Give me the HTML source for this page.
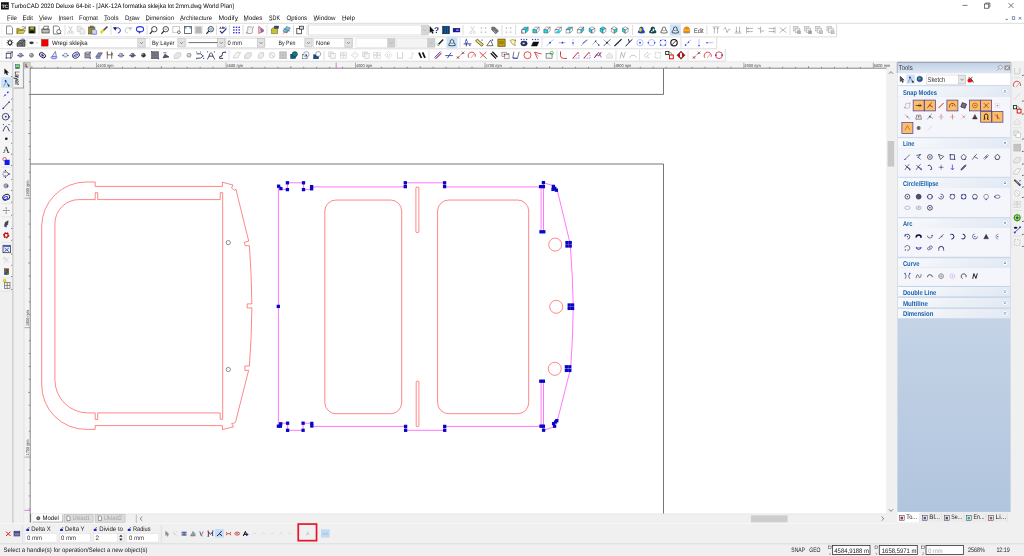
<!DOCTYPE html>
<html lang="en"><head><meta charset="utf-8"><title>TurboCAD 2020 Deluxe 64-bit</title>
<style>
html,body{margin:0;padding:0;background:#f0f0f0;overflow:hidden}
svg{display:block;will-change:transform;font-family:'Liberation Sans', sans-serif;}
text{white-space:pre}
</style></head><body>
<svg width="1024" height="556" viewBox="0 0 1024 556" font-family="'Liberation Sans', sans-serif" text-rendering="geometricPrecision">
<rect x="0.00" y="0.00" width="1024.00" height="556.00" fill="#f0f0f0" />
<rect x="0.00" y="0.00" width="1024.00" height="23.50" fill="#ffffff" />
<rect x="0.00" y="23.50" width="1024.00" height="38.00" fill="#ffffff" />
<rect x="1.00" y="2.20" width="7.80" height="7.30" fill="#111" />
<text x="1.70" y="7.80" font-size="4.8" fill="#fff" textLength="6.40" lengthAdjust="spacingAndGlyphs" font-weight="bold" >TC</text>
<text x="11.00" y="8.30" font-size="6.4" fill="#000" textLength="223.00" lengthAdjust="spacingAndGlyphs" >TurboCAD 2020 Deluxe 64-bit - [JAK-12A formatka sklejka lot 2mm.dwg World Plan]</text>
<line x1="962.50" y1="5.40" x2="967.50" y2="5.40" stroke="#222" stroke-width="0.6" />
<rect x="984.60" y="4.00" width="4.20" height="4.20" fill="none" stroke="#222" stroke-width="0.6" />
<path d="M985.8 4 V3 H989.9 V7 H988.8" stroke="#222" fill="none" stroke-width="0.6" />
<path d="M1008.5 3 L1013.5 8 M1013.5 3 L1008.5 8" stroke="#222" fill="none" stroke-width="0.6" />
<text x="7.00" y="19.60" font-size="6.4" fill="#111" textLength="10.00" lengthAdjust="spacingAndGlyphs" >File</text>
<line x1="7.30" y1="20.60" x2="9.20" y2="20.60" stroke="#333" stroke-width="0.4" />
<text x="22.50" y="19.60" font-size="6.4" fill="#111" textLength="10.50" lengthAdjust="spacingAndGlyphs" >Edit</text>
<line x1="22.80" y1="20.60" x2="24.82" y2="20.60" stroke="#333" stroke-width="0.4" />
<text x="39.00" y="19.60" font-size="6.4" fill="#111" textLength="13.00" lengthAdjust="spacingAndGlyphs" >View</text>
<line x1="39.30" y1="20.60" x2="41.95" y2="20.60" stroke="#333" stroke-width="0.4" />
<text x="58.50" y="19.60" font-size="6.4" fill="#111" textLength="14.50" lengthAdjust="spacingAndGlyphs" >Insert</text>
<line x1="58.80" y1="20.60" x2="60.62" y2="20.60" stroke="#333" stroke-width="0.4" />
<text x="79.00" y="19.60" font-size="6.4" fill="#111" textLength="19.00" lengthAdjust="spacingAndGlyphs" >Format</text>
<line x1="85.63" y1="20.60" x2="88.20" y2="20.60" stroke="#333" stroke-width="0.4" />
<text x="104.00" y="19.60" font-size="6.4" fill="#111" textLength="14.50" lengthAdjust="spacingAndGlyphs" >Tools</text>
<line x1="104.30" y1="20.60" x2="106.60" y2="20.60" stroke="#333" stroke-width="0.4" />
<text x="125.00" y="19.60" font-size="6.4" fill="#111" textLength="14.50" lengthAdjust="spacingAndGlyphs" >Draw</text>
<line x1="128.93" y1="20.60" x2="131.95" y2="20.60" stroke="#333" stroke-width="0.4" />
<text x="145.50" y="19.60" font-size="6.4" fill="#111" textLength="28.50" lengthAdjust="spacingAndGlyphs" >Dimension</text>
<line x1="145.80" y1="20.60" x2="148.37" y2="20.60" stroke="#333" stroke-width="0.4" />
<text x="180.00" y="19.60" font-size="6.4" fill="#111" textLength="32.00" lengthAdjust="spacingAndGlyphs" >Architecture</text>
<line x1="180.30" y1="20.60" x2="182.37" y2="20.60" stroke="#333" stroke-width="0.4" />
<text x="218.50" y="19.60" font-size="6.4" fill="#111" textLength="19.50" lengthAdjust="spacingAndGlyphs" >Modify</text>
<line x1="235.05" y1="20.60" x2="237.70" y2="20.60" stroke="#333" stroke-width="0.4" />
<text x="243.50" y="19.60" font-size="6.4" fill="#111" textLength="19.00" lengthAdjust="spacingAndGlyphs" >Modes</text>
<line x1="243.80" y1="20.60" x2="247.00" y2="20.60" stroke="#333" stroke-width="0.4" />
<text x="269.00" y="19.60" font-size="6.4" fill="#111" textLength="11.00" lengthAdjust="spacingAndGlyphs" >SDK</text>
<line x1="269.30" y1="20.60" x2="272.37" y2="20.60" stroke="#333" stroke-width="0.4" />
<text x="286.50" y="19.60" font-size="6.4" fill="#111" textLength="20.50" lengthAdjust="spacingAndGlyphs" >Options</text>
<line x1="289.73" y1="20.60" x2="292.06" y2="20.60" stroke="#333" stroke-width="0.4" />
<text x="313.50" y="19.60" font-size="6.4" fill="#111" textLength="22.00" lengthAdjust="spacingAndGlyphs" >Window</text>
<line x1="313.80" y1="20.60" x2="316.87" y2="20.60" stroke="#333" stroke-width="0.4" />
<text x="342.00" y="19.60" font-size="6.4" fill="#111" textLength="13.00" lengthAdjust="spacingAndGlyphs" >Help</text>
<line x1="342.30" y1="20.60" x2="344.95" y2="20.60" stroke="#333" stroke-width="0.4" />
<line x1="1005.60" y1="19.40" x2="1007.80" y2="19.40" stroke="#3b5a8a" stroke-width="0.8" />
<rect x="1012.20" y="16.80" width="2.60" height="2.60" fill="none" stroke="#3b5a8a" stroke-width="0.6" />
<path d="M1018.8 17 L1021.2 19.6 M1021.2 17 L1018.8 19.6" stroke="#3b5a8a" fill="none" stroke-width="0.7" />
<line x1="0.00" y1="23.30" x2="1024.00" y2="23.30" stroke="#d8d8d8" stroke-width="0.9" />
<line x1="1.80" y1="25.00" x2="1.80" y2="34.50" stroke="#d4d4d4" stroke-width="0.6" stroke-dasharray="0.8 0.8"/>
<line x1="1.80" y1="38.50" x2="1.80" y2="48.00" stroke="#d4d4d4" stroke-width="0.6" stroke-dasharray="0.8 0.8"/>
<line x1="1.80" y1="50.50" x2="1.80" y2="60.00" stroke="#d4d4d4" stroke-width="0.6" stroke-dasharray="0.8 0.8"/>
<line x1="0.00" y1="36.90" x2="836.60" y2="36.90" stroke="#d8d8d8" stroke-width="0.9" />
<line x1="836.60" y1="24.00" x2="836.60" y2="36.90" stroke="#d8d8d8" stroke-width="0.9" />
<path d="M6.5 26 H10.7 L12.5 27.8 V34 H6.5 Z" stroke="#444" fill="#fff" stroke-width="0.6" />
<path d="M16.8 33.4 V28.4 H19.2 L20.2 29.4 H23.2 V30.6" stroke="#55500a" fill="#b8b030" stroke-width="0.5" />
<path d="M16.8 33.4 L18.8 30.4 H25.4 L23.4 33.4 Z" stroke="#55500a" fill="#d8d040" stroke-width="0.5" />
<path d="M21.6 27.2 Q23.4 25.6 24.8 27.4 L25.4 26.6 V28.8 H23.4 L24.2 28" stroke="#333" fill="none" stroke-width="0.5" />
<rect x="28.90" y="26.90" width="6.20" height="6.20" fill="#4a4a10" stroke="#111" stroke-width="0.5" />
<rect x="30.20" y="27.20" width="3.60" height="2.20" fill="#b8b040" />
<rect x="30.30" y="30.80" width="3.40" height="2.20" fill="#0a0a0a" />
<line x1="39.00" y1="25.00" x2="39.00" y2="35.00" stroke="#c8c8c8" stroke-width="0.6" />
<rect x="41.90" y="29.00" width="7.20" height="4.00" fill="#bbb" stroke="#222" stroke-width="0.6" />
<path d="M43.1 29 L44.1 26.2 H48.5 L47.7 29 Z" stroke="#222" fill="#fff" stroke-width="0.6" />
<path d="M53.4 26 H57.8 L59.4 27.6 V34 H53.4 Z" stroke="#333" fill="#fff" stroke-width="0.6" />
<circle cx="58.80" cy="31.60" r="2" stroke="#222" fill="#fff" stroke-width="0.6" />
<line x1="60.20" y1="33.00" x2="61.30" y2="34.20" stroke="#222" stroke-width="0.7" />
<line x1="65.00" y1="25.00" x2="65.00" y2="35.00" stroke="#c8c8c8" stroke-width="0.6" />
<path d="M68.7 26.2 L71.7 31.6 M72.3 26.2 L69.3 31.6" stroke="#bdbdbd" fill="none" stroke-width="0.8" />
<circle cx="68.70" cy="32.60" r="1.1" stroke="#bdbdbd" fill="none" stroke-width="0.7" />
<circle cx="72.30" cy="32.60" r="1.1" stroke="#bdbdbd" fill="none" stroke-width="0.7" />
<path d="M77.2 26.2 H80.6 L81.8 27.4 V31.6 H77.2 Z" stroke="#c4c4c4" fill="#eee" stroke-width="0.6" />
<path d="M80 28.6 H83.4 L84.8 30 V34 H80 Z" stroke="#c4c4c4" fill="#eee" stroke-width="0.6" />
<rect x="88.50" y="27.00" width="6.40" height="7.00" fill="#9a8a2a" stroke="#4a4a10" stroke-width="0.5" />
<rect x="90.10" y="26.00" width="3.20" height="1.60" fill="#888" stroke="#333" stroke-width="0.4" />
<path d="M91.9 29.4 H95.1 L96.7 30.8 V34.2 H91.9 Z" stroke="#334a9a" fill="#c8d4f4" stroke-width="0.5" />
<line x1="100.60" y1="33.00" x2="103.60" y2="30.20" stroke="#e8d818" stroke-width="2.4" />
<line x1="103.60" y1="30.20" x2="107.40" y2="26.60" stroke="#445" stroke-width="1.5" />
<line x1="111.00" y1="25.00" x2="111.00" y2="35.00" stroke="#c8c8c8" stroke-width="0.6" />
<path d="M115.6 28.4 Q119.6 26.8 120.4 30 Q120.6 32.6 117.8 33.2" stroke="#2a3ad8" fill="none" stroke-width="1.0" />
<path d="M112.8 27.4 L116.4 27 L115.6 30.8 Z" stroke="none" fill="#14148c" stroke-width="0.5" />
<path d="M129.9 28.4 Q125.9 26.8 125.1 30 Q124.9 32.6 127.7 33.2" stroke="#c8c8c8" fill="none" stroke-width="1.0" />
<path d="M132.7 27.4 L129.1 27 L129.9 30.8 Z" stroke="none" fill="#c4c4c4" stroke-width="0.5" />
<ellipse cx="140" cy="29.2" rx="3.6" ry="2.6" fill="none" stroke="#2a3ae0" stroke-width="1.1"/>
<path d="M138.4 30.6 L141 31.8 L139 34 Z" stroke="none" fill="#2a3ae0" stroke-width="0.5" />
<line x1="147.00" y1="25.00" x2="147.00" y2="35.00" stroke="#c8c8c8" stroke-width="0.6" />
<circle cx="154.30" cy="29.20" r="2.7" stroke="#222" fill="#fff" stroke-width="0.8" />
<line x1="152.30" y1="31.20" x2="149.90" y2="33.80" stroke="#222" stroke-width="1.2" />
<circle cx="165.80" cy="29.20" r="2.7" stroke="#222" fill="#fff" stroke-width="0.8" />
<line x1="163.80" y1="31.20" x2="161.40" y2="33.80" stroke="#222" stroke-width="1.2" />
<path d="M164.6 29.2 H167" stroke="#222" fill="none" stroke-width="0.5" />
<rect x="172.90" y="26.40" width="6.40" height="6.40" fill="#fff" stroke="#999" stroke-width="0.5" />
<circle cx="178.90" cy="32.20" r="1.4" stroke="#222" fill="#fff" stroke-width="0.6" />
<rect x="184.40" y="26.60" width="7.20" height="6.80" fill="#fff" stroke="#334" stroke-width="0.7" />
<rect x="185.00" y="27.20" width="1.60" height="1.40" fill="#5aa0e8" />
<rect x="189.40" y="27.20" width="1.60" height="1.40" fill="#5aa0e8" />
<rect x="195.10" y="26.40" width="6.80" height="7.20" fill="#b4b4b4" stroke="#d8d8d8" stroke-width="1.2" />
<circle cx="210.80" cy="29.20" r="2.7" stroke="#222" fill="#fff" stroke-width="0.8" />
<line x1="208.80" y1="31.20" x2="206.40" y2="33.80" stroke="#222" stroke-width="1.2" />
<circle cx="210.80" cy="29.20" r="1.8" stroke="none" fill="#9ac0e8" stroke-width="0.5" />
<line x1="216.50" y1="25.00" x2="216.50" y2="35.00" stroke="#c8c8c8" stroke-width="0.6" />
<text x="223.00" y="29.00" font-size="3.4" fill="#111" font-weight="bold" text-anchor="middle" >ABC</text>
<path d="M220 30.8 L222 33.2 L226.2 28.8" stroke="#1a2ab0" fill="none" stroke-width="1.1" />
<line x1="229.50" y1="25.00" x2="229.50" y2="35.00" stroke="#c8c8c8" stroke-width="0.6" />
<rect x="233.10" y="26.60" width="1.40" height="1.40" fill="#2a2ae8" />
<rect x="233.10" y="29.30" width="1.40" height="1.40" fill="#2a2ae8" />
<rect x="233.10" y="32.00" width="1.40" height="1.40" fill="#2a2ae8" />
<rect x="235.80" y="26.60" width="1.40" height="1.40" fill="#2a2ae8" />
<rect x="235.80" y="29.30" width="1.40" height="1.40" fill="#2a2ae8" />
<rect x="235.80" y="32.00" width="1.40" height="1.40" fill="#2a2ae8" />
<rect x="238.50" y="26.60" width="1.40" height="1.40" fill="#2a2ae8" />
<rect x="238.50" y="29.30" width="1.40" height="1.40" fill="#2a2ae8" />
<rect x="238.50" y="32.00" width="1.40" height="1.40" fill="#2a2ae8" />
<line x1="243.00" y1="25.00" x2="243.00" y2="35.00" stroke="#c8c8c8" stroke-width="0.6" />
<path d="M247.4 33.4 Q246.4 30 247.8 29.4 V27 Q249 26.2 250 27 Q251.6 26.4 252.6 28 V31.4 Q252.4 33.4 251 33.6 Z" stroke="#777" fill="#f4f4f4" stroke-width="0.6" />
<circle cx="253.40" cy="27.00" r="0.6" stroke="none" fill="#e33" stroke-width="0.5" />
<circle cx="246.40" cy="32.80" r="0.6" stroke="none" fill="#e33" stroke-width="0.5" />
<path d="M258.8 26.4 L263.6 30 L258.8 33.6 Z" stroke="#d22" fill="#fde" stroke-width="0.7" />
<path d="M260.6 28.6 L263.8 31 L261.4 32.6 Z" stroke="#223a9a" fill="#88a" stroke-width="0.5" />
<line x1="267.00" y1="25.00" x2="267.00" y2="35.00" stroke="#c8c8c8" stroke-width="0.6" />
<path d="M271.4 33.6 V29 L274 27.2 H277.6 V33.6 Z" stroke="#55500a" fill="#c8c030" stroke-width="0.5" />
<rect x="274.60" y="26.00" width="4.00" height="2.40" fill="#334a9a" stroke="#223" stroke-width="0.4" />
<path d="M282.9 31 L286.5 26.6 L290.3 28 L286.9 33 Z" stroke="#445" fill="#6ad0e0" stroke-width="0.5" />
<line x1="282.90" y1="33.40" x2="287.50" y2="31.40" stroke="#c33" stroke-width="0.7" />
<line x1="283.70" y1="28.60" x2="290.10" y2="31.20" stroke="#334a9a" stroke-width="0.6" />
<line x1="293.50" y1="25.00" x2="293.50" y2="35.00" stroke="#c8c8c8" stroke-width="0.6" />
<rect x="296.80" y="28.40" width="4.60" height="5.40" fill="#fff" stroke="#222" stroke-width="0.7" />
<rect x="299.60" y="26.20" width="4.00" height="3.00" fill="#dde" stroke="#222" stroke-width="0.7" />
<line x1="307.00" y1="25.00" x2="307.00" y2="35.00" stroke="#c8c8c8" stroke-width="0.6" />
<rect x="308.50" y="25.00" width="120.00" height="10.00" fill="#fff" stroke="#c8c8c8" stroke-width="0.6" />
<rect x="421.20" y="25.30" width="7.10" height="9.40" fill="#d6d6d6" stroke="#c4c4c4" stroke-width="0.4" />
<path d="M423.2 29.2 L424.7 30.8 L426.2 29.2" stroke="#aaa" fill="none" stroke-width="0.6" />
<path d="M429.9 26.4 V32.6 L431.3 31.2 L432.3 33.6 L433.3 33.1 L432.3 30.9 H434.1 Z" stroke="#111" fill="#111" stroke-width="0.4" />
<text x="436.50" y="33.00" font-size="8.4" fill="#1a1a8a" font-weight="bold" text-anchor="middle" >?</text>
<rect x="442.60" y="26.20" width="6.80" height="7.60" fill="#0c3a6c" stroke="#06203c" stroke-width="0.5" />
<rect x="444.40" y="26.60" width="1.40" height="6.80" fill="#1a5a9c" />
<rect x="447.00" y="26.60" width="1.00" height="6.80" fill="#1a5a9c" />
<rect x="453.10" y="28.20" width="6.80" height="3.80" fill="#1a1aa0" stroke="#0a0a70" stroke-width="0.4" />
<rect x="456.10" y="29.60" width="2.60" height="1.00" fill="#c8c8f8" />
<line x1="463.00" y1="25.00" x2="463.00" y2="35.00" stroke="#c8c8c8" stroke-width="0.6" />
<path d="M470.7 26.2 L473.7 31.6 M474.3 26.2 L471.3 31.6" stroke="#cfcfcf" fill="none" stroke-width="0.8" />
<circle cx="470.70" cy="32.60" r="1.1" stroke="#cfcfcf" fill="none" stroke-width="0.7" />
<circle cx="474.30" cy="32.60" r="1.1" stroke="#cfcfcf" fill="none" stroke-width="0.7" />
<rect x="480.70" y="27.20" width="1.30" height="1.30" fill="#c0c0c0" />
<rect x="480.70" y="31.60" width="1.30" height="1.30" fill="#c0c0c0" />
<rect x="485.10" y="27.20" width="1.30" height="1.30" fill="#c0c0c0" />
<rect x="485.10" y="31.60" width="1.30" height="1.30" fill="#c0c0c0" />
<rect x="481.30" y="27.80" width="4.40" height="4.40" fill="none" stroke="#c0c0c0" stroke-width="0.4" stroke-dasharray="0.8 0.8"/>
<path d="M491.8 27.2 H494.6 L498.4 31 L495.8 33.8 L491.8 29.8 Z" stroke="#333" fill="#777" stroke-width="0.6" />
<path d="M493.4 30.2 L496 32.8" stroke="#ddd" fill="none" stroke-width="0.5" />
<line x1="502.00" y1="25.00" x2="502.00" y2="35.00" stroke="#c8c8c8" stroke-width="0.6" />
<rect x="505.70" y="27.20" width="1.30" height="1.30" fill="#c0c0c0" />
<rect x="505.70" y="31.60" width="1.30" height="1.30" fill="#c0c0c0" />
<rect x="510.10" y="27.20" width="1.30" height="1.30" fill="#c0c0c0" />
<rect x="510.10" y="31.60" width="1.30" height="1.30" fill="#c0c0c0" />
<rect x="506.30" y="27.80" width="4.40" height="4.40" fill="none" stroke="#c0c0c0" stroke-width="0.4" stroke-dasharray="0.8 0.8"/>
<line x1="515.50" y1="25.00" x2="515.50" y2="35.00" stroke="#c8c8c8" stroke-width="0.6" />
<path d="M521.8 29.6 H525.6 V33 H521.8 Z" stroke="#3a4450" fill="#fff" stroke-width="0.45" />
<path d="M521.8 29.6 L524.4 27.2 H528.2 L525.6 29.6 Z" stroke="#3a4450" fill="#18dce4" stroke-width="0.45" />
<path d="M525.6 29.6 L528.2 27.2 V30.6 L525.6 33 Z" stroke="#3a4450" fill="#18dce4" stroke-width="0.45" />
<line x1="521.60" y1="30.40" x2="521.60" y2="33.20" stroke="#2a3ae0" stroke-width="0.6" />
<line x1="521.60" y1="33.20" x2="523.60" y2="33.20" stroke="#e03030" stroke-width="0.6" />
<path d="M532.8 29.6 H536.6 V33 H532.8 Z" stroke="#3a4450" fill="#18dce4" stroke-width="0.45" />
<path d="M532.8 29.6 L535.4 27.2 H539.2 L536.6 29.6 Z" stroke="#3a4450" fill="#fff" stroke-width="0.45" />
<path d="M536.6 29.6 L539.2 27.2 V30.6 L536.6 33 Z" stroke="#3a4450" fill="#fff" stroke-width="0.45" />
<path d="M543.8 29.6 H547.6 V33 H543.8 Z" stroke="#3a4450" fill="#18dce4" stroke-width="0.45" />
<path d="M543.8 29.6 L546.4 27.2 H550.2 L547.6 29.6 Z" stroke="#3a4450" fill="#fff" stroke-width="0.45" />
<path d="M547.6 29.6 L550.2 27.2 V30.6 L547.6 33 Z" stroke="#3a4450" fill="#fff" stroke-width="0.45" />
<path d="M555.0 29.6 H558.8000000000001 V33 H555.0 Z" stroke="#3a4450" fill="#fff" stroke-width="0.45" />
<path d="M555.0 29.6 L557.6 27.2 H561.4000000000001 L558.8000000000001 29.6 Z" stroke="#3a4450" fill="#fff" stroke-width="0.45" />
<path d="M558.8000000000001 29.6 L561.4000000000001 27.2 V30.6 L558.8000000000001 33 Z" stroke="#3a4450" fill="#fff" stroke-width="0.45" />
<path d="M555.0 33 H558.8000000000001 L561.4000000000001 30.6 H557.6 Z" stroke="none" fill="#18dce4" stroke-width="0.5" />
<path d="M566.0999999999999 29.6 H569.9 V33 H566.0999999999999 Z" stroke="#3a4450" fill="#fff" stroke-width="0.45" />
<path d="M566.0999999999999 29.6 L568.6999999999999 27.2 H572.5 L569.9 29.6 Z" stroke="#3a4450" fill="#18dce4" stroke-width="0.45" />
<path d="M569.9 29.6 L572.5 27.2 V30.6 L569.9 33 Z" stroke="#3a4450" fill="#fff" stroke-width="0.45" />
<path d="M577.3 29.6 H581.1 V33 H577.3 Z" stroke="#3a4450" fill="#fff" stroke-width="0.45" />
<path d="M577.3 29.6 L579.9 27.2 H583.7 L581.1 29.6 Z" stroke="#3a4450" fill="#fff" stroke-width="0.45" />
<path d="M581.1 29.6 L583.7 27.2 V30.6 L581.1 33 Z" stroke="#3a4450" fill="#18dce4" stroke-width="0.45" />
<path d="M592 26.7 L594.9 28.4 L592 30 L589.1 28.4 Z" stroke="#3a4450" fill="#fff" stroke-width="0.45" />
<path d="M589.1 28.4 L592 30 V33.3 L589.1 31.6 Z" stroke="#3a4450" fill="#18dce4" stroke-width="0.45" />
<path d="M594.9 28.4 L592 30 V33.3 L594.9 31.6 Z" stroke="#3a4450" fill="#fff" stroke-width="0.45" />
<path d="M603 26.7 L605.9 28.4 L603 30 L600.1 28.4 Z" stroke="#3a4450" fill="#18dce4" stroke-width="0.45" />
<path d="M600.1 28.4 L603 30 V33.3 L600.1 31.6 Z" stroke="#3a4450" fill="#18dce4" stroke-width="0.45" />
<path d="M605.9 28.4 L603 30 V33.3 L605.9 31.6 Z" stroke="#3a4450" fill="#fff" stroke-width="0.45" />
<path d="M614.2 26.7 L617.1 28.4 L614.2 30 L611.3000000000001 28.4 Z" stroke="#3a4450" fill="#fff" stroke-width="0.45" />
<path d="M611.3000000000001 28.4 L614.2 30 V33.3 L611.3000000000001 31.6 Z" stroke="#3a4450" fill="#fff" stroke-width="0.45" />
<path d="M617.1 28.4 L614.2 30 V33.3 L617.1 31.6 Z" stroke="#3a4450" fill="#18dce4" stroke-width="0.45" />
<path d="M625.3 26.7 L628.1999999999999 28.4 L625.3 30 L622.4 28.4 Z" stroke="#3a4450" fill="#fff" stroke-width="0.45" />
<path d="M622.4 28.4 L625.3 30 V33.3 L622.4 31.6 Z" stroke="#3a4450" fill="#18dce4" stroke-width="0.45" />
<path d="M628.1999999999999 28.4 L625.3 30 V33.3 L628.1999999999999 31.6 Z" stroke="#3a4450" fill="#fff" stroke-width="0.45" />
<line x1="632.50" y1="25.00" x2="632.50" y2="35.00" stroke="#c8c8c8" stroke-width="0.6" />
<path d="M638.1999999999999 32.7 Q637.9 30.5 639.6 30.1 Q639.1 26.9 641.4 26.9 Q643.6999999999999 26.9 643.1999999999999 30.1 Q644.9 30.5 644.6 32.7 Q641.4 33.6 638.1999999999999 32.7 Z" stroke="#1a2a8a" fill="#2a40c8" stroke-width="0.5" />
<ellipse cx="640.6" cy="30.2" rx="1.3" ry="1.9" fill="#e8d820" transform="rotate(25 641.4 30)"/>
<circle cx="641.80" cy="28.60" r="0.9" stroke="none" fill="#2aa84a" stroke-width="0.5" />
<path d="M649.5999999999999 32.7 Q649.3 30.5 651.0 30.1 Q650.5 26.9 652.8 26.9 Q655.0999999999999 26.9 654.5999999999999 30.1 Q656.3 30.5 656.0 32.7 Q652.8 33.6 649.5999999999999 32.7 Z" stroke="#0a1a1a" fill="#0c5050" stroke-width="0.6" />
<ellipse cx="653.4" cy="29.8" rx="0.9" ry="1.6" fill="#e8f4f4" transform="rotate(20 652.8 30)"/>
<circle cx="651.60" cy="31.60" r="0.7" stroke="none" fill="#cfe" stroke-width="0.5" />
<path d="M660.8 32.7 Q660.5 30.5 662.2 30.1 Q661.7 26.9 664 26.9 Q666.3 26.9 665.8 30.1 Q667.5 30.5 667.2 32.7 Q664 33.6 660.8 32.7 Z" stroke="#333" fill="#fdfdfd" stroke-width="0.7" />
<path d="M662.2 30.2 Q664 31.4 665.8 30.2" stroke="#555" fill="none" stroke-width="0.5" />
<rect x="669.70" y="24.40" width="11.20" height="11.20" fill="#cce4f7" />
<path d="M672.0999999999999 32.7 Q671.8 30.5 673.5 30.1 Q673.0 26.9 675.3 26.9 Q677.5999999999999 26.9 677.0999999999999 30.1 Q678.8 30.5 678.5 32.7 Q675.3 33.6 672.0999999999999 32.7 Z" stroke="#1a2a4a" fill="#e6edf5" stroke-width="0.8" />
<path d="M673.5 30.2 Q675.3 31.4 677.0999999999999 30.2" stroke="#34466a" fill="none" stroke-width="0.6" />
<ellipse cx="686.7" cy="32.6" rx="3.4" ry="0.9" fill="#9a9a8a"/>
<path d="M683.6 32.2 Q683.3000000000001 26.8 686.7 26.8 Q690.1 26.8 689.8000000000001 32.2 Z" stroke="#c86a00" fill="#f28c10" stroke-width="0.4" />
<path d="M683.9000000000001 30.2 H689.5" stroke="#f8d040" fill="none" stroke-width="0.9" />
<line x1="706.80" y1="25.00" x2="706.80" y2="35.00" stroke="#c8c8c8" stroke-width="0.6" />
<path d="M714.4 33.4 V28.4 M717.6 33.4 V28.4 M712.6 27 H719.4" stroke="#888" fill="none" stroke-width="0.6" />
<path d="M713.4 28.8 L714.4 27.4 L715.4 28.8 Z M716.6 28.8 L717.6 27.4 L718.6 28.8 Z" stroke="none" fill="#888" stroke-width="0.5" />
<path d="M723.6 29.4 L725.4 27.4 L727 32.6 L728.8 29.4 H730.4" stroke="#888" fill="none" stroke-width="0.6" />
<path d="M736.4 26.6 V31.6 M739.6 26.6 V31.6 M734.6 33 H741.4" stroke="#888" fill="none" stroke-width="0.6" />
<path d="M735.4 31.2 L736.4 32.6 L737.4 31.2 Z M738.6 31.2 L739.6 32.6 L740.6 31.2 Z" stroke="none" fill="#888" stroke-width="0.5" />
<path d="M752.9 28.4 H747.9 M752.9 31.6 H747.9 M746.5 26.6 V33.4" stroke="#888" fill="none" stroke-width="0.6" />
<path d="M748.3 27.4 L746.9 28.4 L748.3 29.4 Z M748.3 30.6 L746.9 31.6 L748.3 32.6 Z" stroke="none" fill="#888" stroke-width="0.5" />
<path d="M757.6 28.6 H760.6 M760.6 26.8 V33.2 M760.6 31 H764.2" stroke="#888" fill="none" stroke-width="0.6" />
<path d="M768.6 28.4 H773.6 M768.6 31.6 H773.6 M775 26.6 V33.4" stroke="#888" fill="none" stroke-width="0.6" />
<path d="M773.2 27.4 L774.6 28.4 L773.2 29.4 Z M773.2 30.6 L774.6 31.6 L773.2 32.6 Z" stroke="none" fill="#888" stroke-width="0.5" />
<path d="M779.6 27.4 L786.4 32.6 M779.6 32.6 L786.4 27.4" stroke="#888" fill="none" stroke-width="0.6" />
<line x1="790.00" y1="25.00" x2="790.00" y2="35.00" stroke="#c8c8c8" stroke-width="0.6" />
<rect x="793.40" y="26.40" width="4.60" height="4.60" fill="#e0e0e0" stroke="#aaa" stroke-width="0.5" />
<rect x="795.20" y="28.20" width="4.60" height="4.60" fill="#ececec" stroke="#aaa" stroke-width="0.5" />
<rect x="797.60" y="30.80" width="3.00" height="3.00" fill="#b0b0b0" stroke="#999" stroke-width="0.4" />
<rect x="804.40" y="26.40" width="4.60" height="4.60" fill="#e0e0e0" stroke="#aaa" stroke-width="0.5" />
<rect x="806.20" y="28.20" width="4.60" height="4.60" fill="#ececec" stroke="#aaa" stroke-width="0.5" />
<rect x="808.60" y="30.80" width="3.00" height="3.00" fill="#999" stroke="#999" stroke-width="0.4" />
<rect x="815.40" y="26.40" width="4.60" height="4.60" fill="#e0e0e0" stroke="#aaa" stroke-width="0.5" />
<rect x="817.20" y="28.20" width="4.60" height="4.60" fill="#ececec" stroke="#aaa" stroke-width="0.5" />
<rect x="819.60" y="30.80" width="3.00" height="3.00" fill="#c8c8c8" stroke="#999" stroke-width="0.4" />
<rect x="826.90" y="26.40" width="4.60" height="4.60" fill="#e0e0e0" stroke="#aaa" stroke-width="0.5" />
<rect x="828.70" y="28.20" width="4.60" height="4.60" fill="#ececec" stroke="#aaa" stroke-width="0.5" />
<rect x="831.10" y="30.80" width="3.00" height="3.00" fill="#c8c8c8" stroke="#999" stroke-width="0.4" />
<text x="694.00" y="32.50" font-size="6.5" fill="#333" textLength="9.60" lengthAdjust="spacingAndGlyphs" >Edit</text>
<line x1="0.00" y1="48.80" x2="716.70" y2="48.80" stroke="#d8d8d8" stroke-width="0.9" />
<line x1="716.70" y1="37.00" x2="716.70" y2="48.80" stroke="#d8d8d8" stroke-width="0.9" />
<circle cx="10.00" cy="42.70" r="1.9" stroke="#222" fill="#fff" stroke-width="1.1" />
<line x1="12.30" y1="42.70" x2="13.30" y2="42.70" stroke="#222" stroke-width="0.9" />
<line x1="11.63" y1="44.33" x2="12.33" y2="45.03" stroke="#222" stroke-width="0.9" />
<line x1="10.00" y1="45.00" x2="10.00" y2="46.00" stroke="#222" stroke-width="0.9" />
<line x1="8.37" y1="44.33" x2="7.67" y2="45.03" stroke="#222" stroke-width="0.9" />
<line x1="7.70" y1="42.70" x2="6.70" y2="42.70" stroke="#222" stroke-width="0.9" />
<line x1="8.37" y1="41.07" x2="7.67" y2="40.37" stroke="#222" stroke-width="0.9" />
<line x1="10.00" y1="40.40" x2="10.00" y2="39.40" stroke="#222" stroke-width="0.9" />
<line x1="11.63" y1="41.07" x2="12.33" y2="40.37" stroke="#222" stroke-width="0.9" />
<path d="M17 43.300000000000004 L20 40.1 H25 V46.300000000000004 H17 Z" stroke="#222" fill="#777" stroke-width="0.6" />
<path d="M17 43.300000000000004 H22 V46.300000000000004 M22 43.300000000000004 L25 40.1" stroke="#222" fill="none" stroke-width="0.5" />
<line x1="21.40" y1="39.10" x2="24.60" y2="39.10" stroke="#2a3ad0" stroke-width="0.8" />
<rect x="27.00" y="38.40" width="123.00" height="8.90" fill="#fff" stroke="#d0d0d0" stroke-width="0.5" />
<ellipse cx="31.5" cy="42.8" rx="2.2" ry="1.4" fill="#334" />
<circle cx="37.00" cy="42.80" r="1" stroke="none" fill="#ddd" stroke-width="0.5" />
<rect x="41.50" y="39.50" width="6.60" height="6.60" fill="#ee0000" stroke="#800" stroke-width="0.4" />
<text x="52.00" y="45.10" font-size="6.3" fill="#111" textLength="35.50" lengthAdjust="spacingAndGlyphs" >Wregi sklejka</text>
<rect x="137.90" y="38.65" width="7.20" height="8.40" fill="#e3e3e3" stroke="#adadad" stroke-width="0.5" />
<path d="M139.9 42.050000000000004 L141.5 43.75 L143.1 42.050000000000004" stroke="#555" fill="none" stroke-width="0.6" />
<text x="152.00" y="45.10" font-size="6.3" fill="#222" textLength="22.50" lengthAdjust="spacingAndGlyphs" >By Layer</text>
<rect x="177.90" y="38.65" width="7.20" height="8.40" fill="#e3e3e3" stroke="#adadad" stroke-width="0.5" />
<path d="M179.9 42.050000000000004 L181.5 43.75 L183.1 42.050000000000004" stroke="#555" fill="none" stroke-width="0.6" />
<rect x="186.00" y="38.40" width="39.50" height="8.90" fill="#fff" stroke="#d0d0d0" stroke-width="0.5" />
<line x1="188.50" y1="42.60" x2="218.00" y2="42.60" stroke="#333" stroke-width="0.7" />
<rect x="217.70" y="38.65" width="7.20" height="8.40" fill="#e3e3e3" stroke="#adadad" stroke-width="0.5" />
<path d="M219.70000000000002 42.050000000000004 L221.3 43.75 L222.9 42.050000000000004" stroke="#555" fill="none" stroke-width="0.6" />
<rect x="226.00" y="38.40" width="39.00" height="8.90" fill="#fff" stroke="#d0d0d0" stroke-width="0.5" />
<text x="227.50" y="45.10" font-size="6.3" fill="#222" textLength="14.50" lengthAdjust="spacingAndGlyphs" >0 mm</text>
<rect x="257.40" y="38.65" width="7.20" height="8.40" fill="#e3e3e3" stroke="#adadad" stroke-width="0.5" />
<path d="M259.4 42.050000000000004 L261 43.75 L262.6 42.050000000000004" stroke="#555" fill="none" stroke-width="0.6" />
<text x="278.50" y="45.10" font-size="6.3" fill="#222" textLength="17.00" lengthAdjust="spacingAndGlyphs" >By Pen</text>
<rect x="304.90" y="38.65" width="7.20" height="8.40" fill="#e3e3e3" stroke="#adadad" stroke-width="0.5" />
<path d="M306.9 42.050000000000004 L308.5 43.75 L310.1 42.050000000000004" stroke="#555" fill="none" stroke-width="0.6" />
<rect x="313.50" y="38.40" width="39.00" height="8.90" fill="#fff" stroke="#d0d0d0" stroke-width="0.5" />
<text x="316.00" y="45.10" font-size="6.3" fill="#222" textLength="14.00" lengthAdjust="spacingAndGlyphs" >None</text>
<rect x="344.90" y="38.65" width="7.20" height="8.40" fill="#e3e3e3" stroke="#adadad" stroke-width="0.5" />
<path d="M346.9 42.050000000000004 L348.5 43.75 L350.1 42.050000000000004" stroke="#555" fill="none" stroke-width="0.6" />
<rect x="356.00" y="38.40" width="39.00" height="8.90" fill="#fff" stroke="#d8d8d8" stroke-width="0.5" />
<rect x="387.70" y="38.65" width="7.20" height="8.40" fill="#cfcfcf" stroke="#c4c4c4" stroke-width="0.5" />
<path d="M389.7 42.050000000000004 L391.3 43.75 L392.90000000000003 42.050000000000004" stroke="#b0b0b0" fill="none" stroke-width="0.6" />
<rect x="396.50" y="38.40" width="38.50" height="8.90" fill="#f4f4f4" stroke="#dcdcdc" stroke-width="0.5" />
<rect x="427.70" y="38.65" width="7.20" height="8.40" fill="#cfcfcf" stroke="#c4c4c4" stroke-width="0.5" />
<path d="M429.7 42.050000000000004 L431.3 43.75 L432.90000000000003 42.050000000000004" stroke="#b0b0b0" fill="none" stroke-width="0.6" />
<line x1="438.60" y1="44.30" x2="443.20" y2="39.50" stroke="#222" stroke-width="1.5" />
<path d="M436.4 43.7 L438.4 45.900000000000006 L439.6 44.5" stroke="#2aa02a" fill="none" stroke-width="0.7" />
<rect x="446.40" y="37.10" width="11.20" height="11.20" fill="#cce4f7" />
<path d="M448.8 45.400000000000006 Q448.5 43.2 450.2 42.800000000000004 Q449.7 39.6 452 39.6 Q454.3 39.6 453.8 42.800000000000004 Q455.5 43.2 455.2 45.400000000000006 Q452 46.300000000000004 448.8 45.400000000000006 Z" stroke="#1a2a4a" fill="#e6edf5" stroke-width="0.8" />
<path d="M450.2 42.900000000000006 Q452 44.1 453.8 42.900000000000006" stroke="#34466a" fill="none" stroke-width="0.6" />
<line x1="460.00" y1="37.70" x2="460.00" y2="47.70" stroke="#c8c8c8" stroke-width="0.6" />
<path d="M466.3 38.900000000000006 V46.300000000000004 M463.7 43.900000000000006 H471.3" stroke="#2a3070" fill="none" stroke-width="0.9" />
<rect x="465.30" y="40.90" width="2.00" height="2.00" fill="#fff" stroke="#2a3ae0" stroke-width="0.5" />
<circle cx="469.90" cy="45.30" r="0.7" stroke="none" fill="#2a3ae0" stroke-width="0.5" />
<rect x="475.5" y="41.400000000000006" width="8" height="2.6" fill="#f0dc50" stroke="#222" stroke-width="0.6" transform="rotate(40 479.5 42.7)"/>
<circle cx="482.10" cy="40.10" r="0.7" stroke="none" fill="#2a3ae0" stroke-width="0.5" />
<path d="M486.8 45.7 L490.6 40.1 L493 45.7 Z" stroke="#333" fill="none" stroke-width="0.7" />
<circle cx="492.40" cy="40.10" r="0.8" stroke="none" fill="#2a3ae0" stroke-width="0.5" />
<rect x="497.90" y="39.10" width="7.20" height="7.20" fill="#c4a010" stroke="#5a4a00" stroke-width="0.7" />
<rect x="499.90" y="41.50" width="3.20" height="2.40" fill="#a88808" stroke="#6a5800" stroke-width="0.3" />
<path d="M509.99999999999994 40.300000000000004 L513.1999999999999 39.5 L515.8 41.300000000000004 L514.5999999999999 43.1 L515.4 45.7 L512.4 44.300000000000004 Z" stroke="#8a7a20" fill="#fbf4b0" stroke-width="0.6" />
<circle cx="515.20" cy="40.10" r="0.7" stroke="none" fill="#334" stroke-width="0.5" />
<circle cx="521.40" cy="39.50" r="0.7" stroke="none" fill="#2a3ae0" stroke-width="0.5" />
<circle cx="524.00" cy="39.50" r="0.7" stroke="none" fill="#2a3ae0" stroke-width="0.5" />
<circle cx="526.60" cy="39.50" r="0.7" stroke="none" fill="#2a3ae0" stroke-width="0.5" />
<ellipse cx="524" cy="43.5" rx="3.2" ry="2.4" fill="#2a3070" stroke="#111" stroke-width="0.5"/>
<ellipse cx="523.6" cy="43.300000000000004" rx="1.2" ry="0.9" fill="#d8dcf8"/>
<circle cx="532.60" cy="39.50" r="0.7" stroke="none" fill="#2a3ae0" stroke-width="0.5" />
<circle cx="535.40" cy="39.50" r="0.7" stroke="none" fill="#2a3ae0" stroke-width="0.5" />
<circle cx="538.00" cy="39.50" r="0.7" stroke="none" fill="#2a3ae0" stroke-width="0.5" />
<path d="M531.4 46.1 L533.2 41.900000000000006 H538.8 L537 46.1 Z" stroke="#000" fill="#111" stroke-width="0.4" />
<line x1="542.00" y1="37.70" x2="542.00" y2="47.70" stroke="#c8c8c8" stroke-width="0.6" />
<line x1="546.60" y1="45.90" x2="553.40" y2="39.50" stroke="#8aa0f0" stroke-width="0.7" />
<circle cx="550.00" cy="42.70" r="0.9" stroke="none" fill="#2233dd" stroke-width="0.5" />
<line x1="558.40" y1="42.70" x2="565.60" y2="42.70" stroke="#8aa0f0" stroke-width="0.7" />
<circle cx="562.40" cy="42.70" r="0.9" stroke="none" fill="#2233dd" stroke-width="0.5" />
<line x1="573.00" y1="39.10" x2="573.00" y2="46.30" stroke="#8aa0f0" stroke-width="0.7" stroke-dasharray="1.6 1"/>
<circle cx="573.00" cy="43.10" r="0.8" stroke="none" fill="#2233dd" stroke-width="0.5" />
<line x1="581.10" y1="45.90" x2="587.90" y2="39.50" stroke="#999" stroke-width="0.7" />
<line x1="582.50" y1="43.30" x2="586.90" y2="40.10" stroke="#2233dd" stroke-width="0.8" />
<path d="M592.6 44.7 L596.4 40.1 M595.4 41.300000000000004 L599.2 45.300000000000004" stroke="#888" fill="none" stroke-width="0.7" />
<circle cx="598.80" cy="45.10" r="0.8" stroke="none" fill="#2233dd" stroke-width="0.5" />
<circle cx="595.60" cy="41.30" r="0.7" stroke="none" fill="#2233dd" stroke-width="0.5" />
<line x1="603.60" y1="46.10" x2="610.40" y2="39.30" stroke="#222" stroke-width="0.7" />
<line x1="603.60" y1="39.70" x2="610.40" y2="45.70" stroke="#6a80e8" stroke-width="0.7" />
<circle cx="607.00" cy="42.70" r="0.9" stroke="none" fill="#222" stroke-width="0.5" />
<line x1="614.40" y1="46.10" x2="621.60" y2="39.10" stroke="#111" stroke-width="1.2" />
<circle cx="617.40" cy="43.30" r="0.9" stroke="none" fill="#334ad0" stroke-width="0.5" />
<path d="M625.6 46.300000000000004 L629.4 42.1 L632.4 39.300000000000004 M629.4 42.1 L628.4 39.1" stroke="#222" fill="none" stroke-width="1.0" />
<circle cx="629.40" cy="42.30" r="0.8" stroke="none" fill="#334ad0" stroke-width="0.5" />
<circle cx="640.00" cy="42.70" r="3.2" stroke="#8aa0f0" fill="none" stroke-width="0.6" />
<circle cx="640.00" cy="42.70" r="0.9" stroke="none" fill="#2233dd" stroke-width="0.5" />
<circle cx="651.50" cy="42.70" r="3.2" stroke="#8aa0f0" fill="none" stroke-width="0.6" />
<circle cx="648.30" cy="42.70" r="0.8" stroke="none" fill="#2233dd" stroke-width="0.5" />
<circle cx="654.70" cy="42.70" r="0.8" stroke="none" fill="#2233dd" stroke-width="0.5" />
<circle cx="663.00" cy="42.70" r="3.2" stroke="#8aa0f0" fill="none" stroke-width="0.6" />
<circle cx="660.70" cy="40.40" r="0.75" stroke="none" fill="#2233dd" stroke-width="0.5" />
<circle cx="665.30" cy="40.40" r="0.75" stroke="none" fill="#2233dd" stroke-width="0.5" />
<circle cx="660.70" cy="45.00" r="0.75" stroke="none" fill="#2233dd" stroke-width="0.5" />
<circle cx="665.30" cy="45.00" r="0.75" stroke="none" fill="#2233dd" stroke-width="0.5" />
<circle cx="674.00" cy="42.70" r="3.2" stroke="#111" fill="none" stroke-width="1.1" />
<line x1="671.60" y1="45.10" x2="676.40" y2="40.30" stroke="#111" stroke-width="0.8" />
<line x1="681.00" y1="37.70" x2="681.00" y2="47.70" stroke="#c8c8c8" stroke-width="0.6" />
<line x1="685.00" y1="45.70" x2="691.00" y2="39.70" stroke="#8aa0f0" stroke-width="0.7" />
<circle cx="685.60" cy="45.10" r="0.8" stroke="none" fill="#2233dd" stroke-width="0.5" />
<circle cx="688.40" cy="42.30" r="0.7" stroke="none" fill="#2233dd" stroke-width="0.5" />
<line x1="699.00" y1="39.10" x2="699.00" y2="45.30" stroke="#8aa0f0" stroke-width="0.6" />
<circle cx="699.00" cy="45.70" r="0.8" stroke="none" fill="#2233dd" stroke-width="0.5" />
<line x1="707.40" y1="42.70" x2="713.60" y2="42.70" stroke="#8aa0f0" stroke-width="0.6" />
<circle cx="707.00" cy="42.70" r="0.8" stroke="none" fill="#2233dd" stroke-width="0.5" />
<line x1="725.30" y1="49.00" x2="725.30" y2="61.20" stroke="#d8d8d8" stroke-width="0.9" />
<line x1="0.00" y1="61.20" x2="725.30" y2="61.20" stroke="#d8d8d8" stroke-width="0.9" />
<rect x="6.20" y="53.40" width="4.60" height="4.60" fill="#fff" stroke="#333" stroke-width="0.7" />
<path d="M6.2 53.400000000000006 L7.6 52.0 H12.2 V56.6 L10.8 58.0 M10.8 53.400000000000006 L12.2 52.0" stroke="#333" fill="none" stroke-width="0.6" />
<circle cx="6.20" cy="58.00" r="0.7" stroke="none" fill="#2a3ae0" stroke-width="0.5" />
<circle cx="10.80" cy="58.00" r="0.7" stroke="none" fill="#2a3ae0" stroke-width="0.5" />
<circle cx="12.20" cy="52.00" r="0.7" stroke="none" fill="#2a3ae0" stroke-width="0.5" />
<circle cx="20.50" cy="55.20" r="2.0" stroke="#555" fill="#8a8ab8" stroke-width="0.5" />
<circle cx="19.80" cy="54.50" r="0.7" stroke="none" fill="#fff" stroke-width="0.5" opacity="0.6"/>
<circle cx="17.90" cy="55.60" r="0.7" stroke="none" fill="#2a3ae0" stroke-width="0.5" />
<circle cx="23.10" cy="55.60" r="0.7" stroke="none" fill="#2a3ae0" stroke-width="0.5" />
<circle cx="31.50" cy="55.20" r="2.0" stroke="#555" fill="#999" stroke-width="0.5" />
<circle cx="30.80" cy="54.50" r="0.7" stroke="none" fill="#fff" stroke-width="0.5" opacity="0.6"/>
<ellipse cx="42.5" cy="55.2" rx="3.4" ry="2.2" fill="#dde" stroke="#223" stroke-width="0.9" transform="rotate(35 42.5 55.2)"/>
<ellipse cx="42.5" cy="55.2" rx="1.6" ry="0.9" fill="#2a3ad0" transform="rotate(35 42.5 55.2)"/>
<path d="M51.2 57.6 L55.4 51.400000000000006 L56.6 57.6" stroke="#445" fill="#e4e8ff" stroke-width="0.6" />
<ellipse cx="54" cy="57.6" rx="2.9" ry="1.2" fill="#c8d0ff" stroke="#2a3ad0" stroke-width="0.6"/>
<circle cx="65.50" cy="55.20" r="2.0" stroke="#555" fill="#dfe4ff" stroke-width="0.5" />
<circle cx="64.80" cy="54.50" r="0.7" stroke="none" fill="#fff" stroke-width="0.5" opacity="0.6"/>
<circle cx="62.90" cy="55.60" r="0.7" stroke="none" fill="#2a3ae0" stroke-width="0.5" />
<circle cx="68.10" cy="55.60" r="0.7" stroke="none" fill="#2a3ae0" stroke-width="0.5" />
<ellipse cx="76" cy="55.2" rx="3.6" ry="2.8" fill="#eef" stroke="#223" stroke-width="0.8" transform="rotate(-25 76 55.2)"/>
<ellipse cx="76" cy="55.2" rx="1.8" ry="1" fill="#fff" stroke="#2a3ad0" stroke-width="0.7" transform="rotate(-25 76 55.2)"/>
<path d="M72.8 56.800000000000004 L79 53.400000000000006" stroke="#2a3ad0" fill="none" stroke-width="0.6" />
<rect x="84.90" y="53.00" width="5.20" height="5.00" fill="#9a9aa4" stroke="#445" stroke-width="0.5" />
<ellipse cx="87.5" cy="53.0" rx="2.6" ry="1.1" fill="#c8c8d0" stroke="#445" stroke-width="0.5"/>
<circle cx="90.30" cy="52.20" r="0.7" stroke="none" fill="#2a3ae0" stroke-width="0.5" />
<circle cx="90.30" cy="58.20" r="0.7" stroke="none" fill="#2a3ae0" stroke-width="0.5" />
<path d="M95.6 57.2 L98.4 52.800000000000004 H102.4 L99.8 57.2 Z" stroke="#334" fill="#8a8ab0" stroke-width="0.5" />
<line x1="96.00" y1="58.20" x2="100.40" y2="58.20" stroke="#2a3ae0" stroke-width="0.8" />
<path d="M107.3 51.6 V58.800000000000004 M111.7 51.6 V58.800000000000004 M107.3 54.800000000000004 H111.7" stroke="#333" fill="none" stroke-width="0.7" />
<path d="M107.3 51.6 V54.800000000000004" stroke="#e03030" fill="none" stroke-width="0.9" />
<text x="112.10" y="56.20" font-size="4.2" fill="#334" text-anchor="middle" >?</text>
<circle cx="121.00" cy="55.20" r="2.0" stroke="#555" fill="#9aa0c0" stroke-width="0.5" />
<circle cx="120.30" cy="54.50" r="0.7" stroke="none" fill="#fff" stroke-width="0.5" opacity="0.6"/>
<circle cx="118.40" cy="55.60" r="0.7" stroke="none" fill="#2a3ae0" stroke-width="0.5" />
<circle cx="123.60" cy="55.60" r="0.7" stroke="none" fill="#2a3ae0" stroke-width="0.5" />
<circle cx="132.50" cy="55.20" r="2.0" stroke="#555" fill="#556" stroke-width="0.5" />
<circle cx="131.80" cy="54.50" r="0.7" stroke="none" fill="#fff" stroke-width="0.5" opacity="0.6"/>
<circle cx="129.90" cy="55.60" r="0.7" stroke="none" fill="#2a3ae0" stroke-width="0.5" />
<circle cx="135.10" cy="55.60" r="0.7" stroke="none" fill="#2a3ae0" stroke-width="0.5" />
<circle cx="143.50" cy="55.20" r="2.0" stroke="#555" fill="#333" stroke-width="0.5" />
<circle cx="142.80" cy="54.50" r="0.7" stroke="none" fill="#fff" stroke-width="0.5" opacity="0.6"/>
<rect x="151.40" y="51.60" width="7.20" height="7.20" fill="#6a6a72" stroke="#444" stroke-width="0.4" />
<path d="M153.8 51.6 V58.800000000000004 M156.2 51.6 V58.800000000000004 M151.4 54.0 H158.6 M151.4 56.400000000000006 H158.6" stroke="#8c8c94" fill="none" stroke-width="0.4" />
<circle cx="151.60" cy="51.60" r="0.6" stroke="none" fill="#2a3ae0" stroke-width="0.5" />
<circle cx="158.60" cy="58.80" r="0.6" stroke="none" fill="#2a3ae0" stroke-width="0.5" />
<path d="M163 57.800000000000004 L165 54.2 L169 57.0 Z" stroke="#223" fill="#556" stroke-width="0.6" />
<path d="M163.4 52.800000000000004 H166.4" stroke="#2a3ae0" fill="none" stroke-width="0.8" />
<path d="M174.1 55.6 L176.5 52.800000000000004 H180.7 V56.2 L178.3 58.400000000000006 H174.1 Z" stroke="#c4c4c4" fill="#e8e8e8" stroke-width="0.7" />
<circle cx="189.00" cy="55.20" r="2.0" stroke="#555" fill="#d4d4d4" stroke-width="0.5" />
<circle cx="188.30" cy="54.50" r="0.7" stroke="none" fill="#fff" stroke-width="0.5" opacity="0.6"/>
<path d="M196.6 53.800000000000004 H200.4 L203.4 56.0 L200.4 58.2 H196.6" stroke="#223" fill="none" stroke-width="0.8" />
<circle cx="196.60" cy="52.00" r="0.6" stroke="none" fill="#2a3ae0" stroke-width="0.5" />
<circle cx="200.60" cy="52.00" r="0.6" stroke="none" fill="#2a3ae0" stroke-width="0.5" />
<circle cx="203.60" cy="58.40" r="0.6" stroke="none" fill="#2a3ae0" stroke-width="0.5" />
<circle cx="196.60" cy="58.60" r="0.6" stroke="none" fill="#2a3ae0" stroke-width="0.5" />
<path d="M208 58.400000000000006 L210 53.6 Q211 51.6 212 53.6 L214 58.400000000000006 M209 56.2 H213" stroke="#223" fill="none" stroke-width="0.8" />
<circle cx="207.60" cy="51.80" r="0.6" stroke="none" fill="#2a3ae0" stroke-width="0.5" />
<circle cx="214.40" cy="51.80" r="0.6" stroke="none" fill="#2a3ae0" stroke-width="0.5" />
<circle cx="207.40" cy="58.80" r="0.6" stroke="none" fill="#2a3ae0" stroke-width="0.5" />
<circle cx="214.60" cy="58.80" r="0.6" stroke="none" fill="#2a3ae0" stroke-width="0.5" />
<path d="M225.3 52.2 Q221.9 51.6 222.3 54.2 Q222.9 56.6 219.7 56.6 V58.400000000000006 H223.1" stroke="#223" fill="none" stroke-width="0.9" />
<circle cx="225.50" cy="52.20" r="0.7" stroke="none" fill="#2a3ae0" stroke-width="0.5" />
<line x1="229.00" y1="50.20" x2="229.00" y2="60.20" stroke="#c8c8c8" stroke-width="0.6" />
<path d="M233.4 56.6 L236.6 52.400000000000006 H240.6 L237.6 58.0 H233.4 Z" stroke="#c4c4c4" fill="#f4f4f4" stroke-width="0.7" />
<path d="M244.6 55.6 L247 52.800000000000004 H251.2 V56.2 L248.8 58.400000000000006 H244.6 Z" stroke="#c4c4c4" fill="#e8e8e8" stroke-width="0.7" />
<path d="M258.4 58.2 V54.6 L260.4 52.6 H263.6 V56.2 L261.8 58.2 Z" stroke="#c4c4c4" fill="#ececec" stroke-width="0.7" />
<circle cx="272.00" cy="55.20" r="2.8" stroke="#c4c4c4" fill="#f8f8f8" stroke-width="0.7" />
<line x1="270.20" y1="53.40" x2="273.80" y2="57.00" stroke="#c4c4c4" stroke-width="0.7" />
<rect x="279.20" y="51.40" width="7.60" height="7.60" fill="#bdbdbd" />
<path d="M279.2 54.0 H286.8 M279.2 56.6 H286.8 M281.8 51.400000000000006 V59.0 M284.4 51.400000000000006 V59.0" stroke="#d4d4d4" fill="none" stroke-width="0.4" />
<rect x="290.60" y="54.20" width="5.00" height="4.40" fill="#0d5a8a" stroke="#0a2a4a" stroke-width="0.4" />
<circle cx="294.80" cy="54.20" r="2.6" stroke="#0a2a4a" fill="#147a78" stroke-width="0.5" />
<rect x="302.30" y="54.60" width="4.80" height="4.20" fill="#fff" stroke="#445" stroke-width="0.5" />
<circle cx="306.30" cy="54.40" r="2.7" stroke="#556" fill="#fff" stroke-width="0.5" />
<path d="M304.5 54.6 H307.1 V57.0 Z" stroke="none" fill="#0d4a8a" stroke-width="0.5" />
<rect x="313.60" y="54.80" width="5.00" height="4.00" fill="#0d4a8a" stroke="#0a2a4a" stroke-width="0.4" />
<circle cx="318.20" cy="54.00" r="2.5" stroke="#556" fill="#fff" stroke-width="0.5" />
<line x1="324.00" y1="50.20" x2="324.00" y2="60.20" stroke="#c8c8c8" stroke-width="0.6" />
<rect x="328.80" y="52.00" width="4.40" height="4.80" fill="#f2f2f2" stroke="#c4c4c4" stroke-width="0.6" />
<rect x="330.80" y="53.60" width="4.40" height="4.80" fill="#f6f6f6" stroke="#c4c4c4" stroke-width="0.6" />
<rect x="340.30" y="52.20" width="2.80" height="2.60" fill="none" stroke="#cdcdcd" stroke-width="0.6" />
<rect x="340.30" y="55.60" width="2.80" height="2.60" fill="none" stroke="#cdcdcd" stroke-width="0.6" />
<rect x="343.90" y="52.20" width="2.80" height="2.60" fill="none" stroke="#cdcdcd" stroke-width="0.6" />
<rect x="343.90" y="55.60" width="2.80" height="2.60" fill="none" stroke="#cdcdcd" stroke-width="0.6" />
<path d="M354 54.2 V52.6 L355 51.400000000000006 L356 52.6 V54.2 H357.6 L358.8 55.2 L357.6 56.2 H356 V57.800000000000004 L355 59.0 L354 57.800000000000004 V56.2 H352.4 L351.2 55.2 L352.4 54.2 Z" stroke="#cdcdcd" fill="none" stroke-width="0.6" />
<rect x="362.80" y="52.00" width="4.40" height="4.80" fill="#f2f2f2" stroke="#c4c4c4" stroke-width="0.6" />
<rect x="364.80" y="53.60" width="4.40" height="4.80" fill="#f6f6f6" stroke="#c4c4c4" stroke-width="0.6" />
<rect x="373.80" y="52.20" width="2.80" height="2.60" fill="none" stroke="#cdcdcd" stroke-width="0.6" />
<rect x="373.80" y="55.60" width="2.80" height="2.60" fill="none" stroke="#cdcdcd" stroke-width="0.6" />
<rect x="377.40" y="52.20" width="2.80" height="2.60" fill="none" stroke="#cdcdcd" stroke-width="0.6" />
<rect x="377.40" y="55.60" width="2.80" height="2.60" fill="none" stroke="#cdcdcd" stroke-width="0.6" />
<path d="M388.5 51.400000000000006 L392.1 55.2 L388.5 59.0 L384.9 55.2 Z" stroke="#cdcdcd" fill="none" stroke-width="0.6" />
<rect x="387.50" y="54.20" width="2.00" height="2.00" fill="none" stroke="#cdcdcd" stroke-width="0.5" />
<path d="M397.4 52.2 V58.2 H402.6 V52.2" stroke="#c4c4c4" fill="none" stroke-width="0.8" />
<path d="M408.6 58.2 H412 M412 58.2 V52.6 L414 54.2" stroke="#d4d4d4" fill="none" stroke-width="0.7" />
<line x1="419.00" y1="52.60" x2="421.40" y2="58.00" stroke="#111" stroke-width="1.7" />
<line x1="422.60" y1="52.40" x2="425.00" y2="57.80" stroke="#111" stroke-width="1.7" />
<line x1="429.00" y1="50.20" x2="429.00" y2="60.20" stroke="#c8c8c8" stroke-width="0.6" />
<line x1="434.60" y1="57.60" x2="440.60" y2="51.60" stroke="#2a3ae0" stroke-width="1.0" />
<line x1="435.40" y1="58.80" x2="441.40" y2="52.80" stroke="#e02020" stroke-width="1.0" />
<line x1="436.40" y1="58.80" x2="441.60" y2="53.60" stroke="#445" stroke-width="0.5" />
<line x1="445.20" y1="55.60" x2="452.80" y2="55.60" stroke="#334" stroke-width="0.8" />
<line x1="447.40" y1="58.20" x2="451.00" y2="52.60" stroke="#2a3ae0" stroke-width="0.9" />
<line x1="456.90" y1="58.60" x2="459.90" y2="55.60" stroke="#e02020" stroke-width="1.0" />
<line x1="461.10" y1="54.60" x2="462.50" y2="53.20" stroke="#e02020" stroke-width="1.0" />
<path d="M461.9 51.6 L464.3 54.0 M464.3 51.6 L461.9 54.0" stroke="#222" fill="none" stroke-width="0.6" />
<path d="M456.9 56.400000000000006 L459.1 58.800000000000004" stroke="#222" fill="none" stroke-width="0.6" />
<path d="M468.8 57.800000000000004 A3.6 3.6 0 1 1 475.2 56.800000000000004" stroke="#e02020" fill="none" stroke-width="0.8" />
<line x1="471.00" y1="58.20" x2="474.40" y2="53.60" stroke="#9a9a9a" stroke-width="0.7" />
<line x1="479.60" y1="52.20" x2="483.40" y2="55.60" stroke="#e02020" stroke-width="0.9" />
<line x1="486.40" y1="51.80" x2="480.40" y2="57.80" stroke="#e02020" stroke-width="0.7" />
<line x1="483.40" y1="55.60" x2="486.60" y2="58.80" stroke="#555" stroke-width="0.9" />
<line x1="490.80" y1="53.20" x2="496.00" y2="58.60" stroke="#111" stroke-width="1.3" />
<line x1="492.40" y1="51.80" x2="497.40" y2="57.00" stroke="#111" stroke-width="1.3" />
<line x1="491.60" y1="52.40" x2="496.80" y2="57.80" stroke="#bbb" stroke-width="0.5" />
<rect x="501.90" y="52.20" width="4.40" height="4.40" fill="#eee" stroke="#777" stroke-width="0.6" />
<rect x="504.70" y="54.60" width="4.40" height="4.20" fill="#f4f4f4" stroke="#777" stroke-width="0.6" />
<circle cx="504.50" cy="54.60" r="0.8" stroke="none" fill="#e02020" stroke-width="0.5" />
<circle cx="508.10" cy="53.80" r="0.7" stroke="none" fill="#2a3ae0" stroke-width="0.5" />
<path d="M513.8 51.800000000000004 L512.8 58.0 L517.4 58.400000000000006 L519.2 51.800000000000004" stroke="#556" fill="none" stroke-width="0.8" />
<path d="M512.8 58.0 L517.4 58.400000000000006" stroke="#2a3ae0" fill="none" stroke-width="0.9" />
<circle cx="527.50" cy="55.20" r="3.5" stroke="#e02020" fill="none" stroke-width="0.8" />
<path d="M534.6 52.2 L541.6 54.0 M534.6 52.2 L537.6 58.800000000000004" stroke="#e02020" fill="none" stroke-width="0.8" />
<path d="M534.6 52.2 L539 56.6" stroke="#777" fill="none" stroke-width="0.6" />
<rect x="546.10" y="53.60" width="6.00" height="4.60" fill="#f4f4f4" stroke="#666" stroke-width="0.7" />
<circle cx="551.70" cy="53.00" r="1.7" stroke="#2ab82a" fill="none" stroke-width="0.7" />
<line x1="557.00" y1="50.20" x2="557.00" y2="60.20" stroke="#c8c8c8" stroke-width="0.6" />
<path d="M560.5 51.400000000000006 V55.6 Q560.5 58.400000000000006 563.5 58.400000000000006 H566.9" stroke="#d83a3a" fill="none" stroke-width="1.0" />
<line x1="572.80" y1="58.20" x2="578.40" y2="52.00" stroke="#e02020" stroke-width="1.0" />
<path d="M572.8 58.2 H579.4 L578.4 52.0" stroke="#2a3ae0" fill="none" stroke-width="0.6" stroke-dasharray="0.9 0.9"/>
<line x1="583.80" y1="58.20" x2="589.40" y2="52.00" stroke="#e02020" stroke-width="1.0" />
<path d="M583.8 58.2 H590.4 L589.4 52.0" stroke="#2a3ae0" fill="none" stroke-width="0.6" stroke-dasharray="0.9 0.9"/>
<path d="M594.4 57.800000000000004 L597 54.2 L598.6 56.2 L601.2 52.2" stroke="#e02020" fill="none" stroke-width="1.0" />
<path d="M594.4 57.800000000000004 L598.6 52.2 L601.4 57.6" stroke="#2a3ae0" fill="none" stroke-width="0.7" />
<path d="M606.5 58.2 V55.2 L609.5 52.6 L612.5 55.2 V58.2 Z" stroke="#d0d0d0" fill="#ececec" stroke-width="0.6" />
<line x1="616.00" y1="50.20" x2="616.00" y2="60.20" stroke="#c8c8c8" stroke-width="0.6" />
<path d="M619.9 58.6 L621.5 52.2 L623.5 57.800000000000004 L625.3 51.800000000000004" stroke="#a4a4a4" fill="none" stroke-width="0.7" />
<path d="M629.6 57.6 A3.6 3.6 0 0 1 636.4 57.6" stroke="#b0b0b0" fill="none" stroke-width="0.7" />
<line x1="639.50" y1="50.20" x2="639.50" y2="60.20" stroke="#c8c8c8" stroke-width="0.6" />
<path d="M648 52.0 L644 55.800000000000004 L647.4 58.400000000000006 M650.4 53.2 L647 56.0 L649.6 58.400000000000006" stroke="#c0c0c0" fill="none" stroke-width="0.7" />
<rect x="655.20" y="52.40" width="5.60" height="5.60" fill="none" stroke="#c0c0c0" stroke-width="0.9" stroke-dasharray="1.6 1.2"/>
<rect x="665.70" y="51.40" width="3.20" height="3.20" fill="#fff" stroke="#111" stroke-width="0.8" />
<path d="M668.1 52.2 Q672.1 51.800000000000004 672.3 55.2" stroke="#2ab02a" fill="none" stroke-width="0.7" />
<rect x="669.50" y="55.00" width="3.80" height="3.80" fill="#fff" stroke="#e01010" stroke-width="1.0" />
<path d="M681 51.2 L685 55.2 L681 59.2 L677 55.2 Z" stroke="#300" fill="#b81010" stroke-width="0.5" />
<rect x="680.00" y="52.80" width="2.00" height="4.80" fill="#fff" rx="0.8" />
<line x1="688.00" y1="50.20" x2="688.00" y2="60.20" stroke="#c8c8c8" stroke-width="0.6" />
<line x1="692.90" y1="58.60" x2="695.90" y2="55.60" stroke="#e02020" stroke-width="1.0" />
<line x1="697.10" y1="54.60" x2="698.50" y2="53.20" stroke="#e02020" stroke-width="1.0" />
<path d="M697.9 51.6 L700.3 54.0 M700.3 51.6 L697.9 54.0" stroke="#222" fill="none" stroke-width="0.6" />
<path d="M692.9 56.400000000000006 L695.1 58.800000000000004" stroke="#222" fill="none" stroke-width="0.6" />
<path d="M704.8 57.800000000000004 A3.6 3.6 0 1 1 711.2 56.800000000000004" stroke="#e02020" fill="none" stroke-width="0.8" />
<line x1="707.00" y1="58.20" x2="710.40" y2="53.60" stroke="#9a9a9a" stroke-width="0.7" />
<circle cx="719.00" cy="55.20" r="3.4" stroke="#e02020" fill="#fff" stroke-width="0.8" />
<circle cx="715.80" cy="55.20" r="1" stroke="none" fill="#5a4ad0" stroke-width="0.5" />
<circle cx="722.20" cy="55.20" r="1" stroke="none" fill="#5a4ad0" stroke-width="0.5" />
<rect x="0.00" y="61.80" width="12.80" height="229.00" fill="#f5f5f5" />
<line x1="0.00" y1="61.80" x2="1024.00" y2="61.80" stroke="#e2e2e2" stroke-width="0.5" />
<rect x="1.00" y="77.30" width="11.40" height="10.80" fill="#cce4f7" />
<path d="M4.6 68.8 V74 L5.9 72.8 L6.9 74.9 L7.8 74.5 L6.9 72.5 H8.6 Z" stroke="#111" fill="#111" stroke-width="0.3" />
<path d="M3.6 86.6 L6.2 81.6 L8.8 85.4" stroke="#777" fill="none" stroke-width="0.7" />
<circle cx="5.60" cy="81.00" r="0.9" stroke="none" fill="#1a22e0" stroke-width="0.5" />
<path d="M7.4 84.2 L8.8 86.8 L9.4 85" stroke="#223" fill="#223" stroke-width="0.4" />
<line x1="3.20" y1="97.00" x2="9.40" y2="90.80" stroke="#9aa8f0" stroke-width="0.7" stroke-dasharray="1.6 1"/>
<circle cx="5.00" cy="95.20" r="0.8" stroke="none" fill="#1a22e0" stroke-width="0.5" />
<circle cx="7.80" cy="92.40" r="0.8" stroke="none" fill="#1a22e0" stroke-width="0.5" />
<line x1="3.20" y1="108.40" x2="9.20" y2="102.00" stroke="#223" stroke-width="0.8" />
<circle cx="3.20" cy="108.40" r="0.8" stroke="none" fill="#1a22e0" stroke-width="0.5" />
<circle cx="9.20" cy="102.00" r="0.8" stroke="none" fill="#1a22e0" stroke-width="0.5" />
<circle cx="5.60" cy="116.70" r="3.3" stroke="#223" fill="none" stroke-width="0.8" />
<circle cx="5.80" cy="116.70" r="0.9" stroke="none" fill="#1a22e0" stroke-width="0.5" />
<circle cx="9.20" cy="116.70" r="0.8" stroke="none" fill="#1a22e0" stroke-width="0.5" />
<path d="M3.4 130.6 Q6.2 121.6 9 130.6" stroke="#223" fill="none" stroke-width="0.8" />
<circle cx="3.40" cy="124.60" r="0.6" stroke="none" fill="#1a22e0" stroke-width="0.5" />
<circle cx="9.00" cy="124.60" r="0.6" stroke="none" fill="#1a22e0" stroke-width="0.5" />
<circle cx="3.20" cy="130.80" r="0.6" stroke="none" fill="#1a22e0" stroke-width="0.5" />
<circle cx="9.20" cy="130.80" r="0.6" stroke="none" fill="#1a22e0" stroke-width="0.5" />
<circle cx="6.30" cy="138.70" r="1.3" stroke="none" fill="#111" stroke-width="0.5" />
<text x="6.20" y="153.40" font-size="9.6" fill="#111" text-anchor="middle" font-family='"Liberation Serif", serif'>A</text>
<circle cx="4.60" cy="159.20" r="1.7" stroke="#d01010" fill="#fff" stroke-width="0.7" />
<rect x="4.60" y="159.80" width="5.00" height="5.20" fill="#1018f0" />
<line x1="1.20" y1="167.20" x2="11.60" y2="167.20" stroke="#dcdcdc" stroke-width="0.6" />
<path d="M3.2 172 H6.6 L9.2 174 L6.6 176 H3.2" stroke="#223" fill="none" stroke-width="0.7" />
<circle cx="5.40" cy="170.40" r="0.6" stroke="none" fill="#1a22e0" stroke-width="0.5" />
<circle cx="9.60" cy="174.00" r="0.6" stroke="none" fill="#1a22e0" stroke-width="0.5" />
<circle cx="5.40" cy="177.40" r="0.6" stroke="none" fill="#1a22e0" stroke-width="0.5" />
<circle cx="3.00" cy="174.00" r="0.6" stroke="none" fill="#1a22e0" stroke-width="0.5" />
<circle cx="6.00" cy="185.80" r="2.1" stroke="#556" fill="#a8a8b4" stroke-width="0.5" />
<circle cx="7.60" cy="186.20" r="0.7" stroke="none" fill="#1a22e0" stroke-width="0.5" />
<ellipse cx="6.2" cy="197.3" rx="3.6" ry="2.7" fill="#eef" stroke="#1a1a3a" stroke-width="0.9" transform="rotate(-28 6.2 197.3)"/>
<ellipse cx="5.6" cy="198" rx="2.2" ry="1.3" fill="none" stroke="#1a22e0" stroke-width="0.9" transform="rotate(-28 5.6 198)"/>
<line x1="1.20" y1="203.60" x2="11.60" y2="203.60" stroke="#dcdcdc" stroke-width="0.6" />
<path d="M2.8 210.5 H5 M7.4 210.5 H9.6 M6.2 207 V209.2 M6.2 211.8 V214" stroke="#555" fill="none" stroke-width="0.6" />
<path d="M5.4 210.5 H7 M6.2 209.7 V211.3" stroke="#555" fill="none" stroke-width="0.6" />
<line x1="1.20" y1="216.90" x2="11.60" y2="216.90" stroke="#dcdcdc" stroke-width="0.6" />
<path d="M4.4 226.4 L5.2 222.4 L8.2 220.8 L7.6 224.8 Z" stroke="#223" fill="#445" stroke-width="0.5" />
<circle cx="6.00" cy="226.60" r="0.8" stroke="none" fill="#1a22e0" stroke-width="0.5" />
<circle cx="6.20" cy="235.30" r="2.3" stroke="#b80c0c" fill="none" stroke-width="1.7" stroke-dasharray="1.25 0.85"/>
<circle cx="6.20" cy="235.30" r="1.9" stroke="#b80c0c" fill="#fff" stroke-width="1.1" />
<line x1="1.20" y1="242.30" x2="11.60" y2="242.30" stroke="#dcdcdc" stroke-width="0.6" />
<rect x="3.00" y="245.30" width="7.40" height="7.40" fill="#e6ecf6" stroke="#223" stroke-width="0.7" />
<rect x="3.40" y="245.60" width="6.60" height="1.30" fill="#3a5ad0" />
<path d="M4.6 248 L8.8 251.6 M8.8 248 L4.6 251.6" stroke="#2a3ad0" fill="none" stroke-width="0.8" />
<path d="M4 257.4 L8.6 263 M8.6 257.8 L4.2 263.2" stroke="#cfcfcf" fill="none" stroke-width="0.8" />
<circle cx="4.60" cy="258.40" r="1.3" stroke="#cfcfcf" fill="none" stroke-width="0.6" />
<rect x="4.40" y="268.80" width="4.20" height="5.80" fill="#445" stroke="#334" stroke-width="0.4" />
<rect x="4.70" y="269.10" width="1.60" height="1.40" fill="#2aa02a" />
<rect x="6.70" y="269.10" width="1.60" height="1.40" fill="#d02020" />
<rect x="4.70" y="271.00" width="1.60" height="1.40" fill="#2aa02a" />
<rect x="6.70" y="271.00" width="1.60" height="1.40" fill="#d02020" />
<rect x="4.70" y="272.90" width="1.60" height="1.40" fill="#2a4ad0" />
<rect x="6.70" y="272.90" width="1.60" height="1.40" fill="#2aa02a" />
<line x1="1.20" y1="278.00" x2="11.60" y2="278.00" stroke="#dcdcdc" stroke-width="0.6" />
<rect x="4.40" y="282.60" width="5.60" height="5.80" fill="#f4f4f4" stroke="#333" stroke-width="0.5" />
<path d="M4.4 285.4 H10 M7.2 282.6 V288.4" stroke="#333" fill="none" stroke-width="0.5" />
<circle cx="4.60" cy="280.80" r="1.5" stroke="#a0a000" fill="#e8e020" stroke-width="0.4" />
<path d="M12.4 77 V75.6 L11 77 Z" stroke="none" fill="#222" stroke-width="0.5" />
<path d="M12.4 99.4 V98.0 L11 99.4 Z" stroke="none" fill="#222" stroke-width="0.5" />
<path d="M12.4 110.3 V108.89999999999999 L11 110.3 Z" stroke="none" fill="#222" stroke-width="0.5" />
<path d="M12.4 121.4 V120.0 L11 121.4 Z" stroke="none" fill="#222" stroke-width="0.5" />
<path d="M12.4 132.7 V131.29999999999998 L11 132.7 Z" stroke="none" fill="#222" stroke-width="0.5" />
<path d="M12.4 143.6 V142.2 L11 143.6 Z" stroke="none" fill="#222" stroke-width="0.5" />
<path d="M12.4 154.5 V153.1 L11 154.5 Z" stroke="none" fill="#222" stroke-width="0.5" />
<path d="M12.4 166 V164.6 L11 166 Z" stroke="none" fill="#222" stroke-width="0.5" />
<path d="M12.4 179.8 V178.4 L11 179.8 Z" stroke="none" fill="#222" stroke-width="0.5" />
<path d="M12.4 191 V189.6 L11 191 Z" stroke="none" fill="#222" stroke-width="0.5" />
<path d="M12.4 202.5 V201.1 L11 202.5 Z" stroke="none" fill="#222" stroke-width="0.5" />
<path d="M12.4 215.6 V214.2 L11 215.6 Z" stroke="none" fill="#222" stroke-width="0.5" />
<path d="M12.4 229 V227.6 L11 229 Z" stroke="none" fill="#222" stroke-width="0.5" />
<path d="M12.4 240.6 V239.2 L11 240.6 Z" stroke="none" fill="#222" stroke-width="0.5" />
<path d="M12.4 254.4 V253.0 L11 254.4 Z" stroke="none" fill="#222" stroke-width="0.5" />
<path d="M12.4 265.6 V264.20000000000005 L11 265.6 Z" stroke="none" fill="#222" stroke-width="0.5" />
<path d="M12.4 277 V275.6 L11 277 Z" stroke="none" fill="#222" stroke-width="0.5" />
<path d="M12.4 290 V288.6 L11 290 Z" stroke="none" fill="#222" stroke-width="0.5" />
<line x1="12.85" y1="62.00" x2="12.85" y2="523.20" stroke="#c8c8c8" stroke-width="1.2" />
<line x1="0.00" y1="291.00" x2="12.40" y2="291.00" stroke="#dadada" stroke-width="0.6" />
<line x1="24.00" y1="88.50" x2="24.00" y2="523.00" stroke="#dcdcdc" stroke-width="0.5" />
<rect x="13.60" y="62.30" width="9.60" height="25.40" fill="#f4f4f4" />
<line x1="23.40" y1="62.30" x2="23.40" y2="88.20" stroke="#8a8a8a" stroke-width="0.8" />
<line x1="13.60" y1="88.00" x2="23.70" y2="88.00" stroke="#8a8a8a" stroke-width="0.8" />
<rect x="15.60" y="64.40" width="3.80" height="4.20" fill="#2aa02a" stroke="#5a3a9a" stroke-width="0.5" />
<rect x="15.90" y="64.50" width="3.20" height="1.30" fill="#30d8e8" />
<rect x="15.90" y="65.80" width="3.20" height="1.20" fill="#d8d020" />
<text x="0.00" y="0.00" font-size="6.4" fill="#222" textLength="13.80" lengthAdjust="spacingAndGlyphs" stroke="#222" stroke-width="0.15" transform="translate(14.8 71.2) rotate(90)">Layer</text>
<rect x="24.50" y="62.40" width="871.00" height="6.00" fill="#f3f3f3" />
<rect x="24.30" y="62.60" width="5.80" height="5.80" fill="#d6d3c6" stroke="#888" stroke-width="0.4" />
<path d="M26 63.6 V67 H27.6" stroke="#111" fill="none" stroke-width="0.7" />
<line x1="30.00" y1="68.30" x2="886.50" y2="68.30" stroke="#2a2a2a" stroke-width="0.8" />
<line x1="31.88" y1="66.20" x2="31.88" y2="68.20" stroke="#444" stroke-width="0.55" />
<line x1="44.82" y1="66.80" x2="44.82" y2="68.20" stroke="#444" stroke-width="0.55" />
<line x1="57.77" y1="66.80" x2="57.77" y2="68.20" stroke="#444" stroke-width="0.55" />
<line x1="70.71" y1="66.80" x2="70.71" y2="68.20" stroke="#444" stroke-width="0.55" />
<line x1="83.66" y1="66.80" x2="83.66" y2="68.20" stroke="#444" stroke-width="0.55" />
<line x1="96.60" y1="62.60" x2="96.60" y2="68.20" stroke="#666" stroke-width="0.5" />
<text x="97.10" y="66.80" font-size="4.2" fill="#444" textLength="16.40" lengthAdjust="spacingAndGlyphs" >4400 mm</text>
<line x1="109.54" y1="66.80" x2="109.54" y2="68.20" stroke="#444" stroke-width="0.55" />
<line x1="122.49" y1="66.80" x2="122.49" y2="68.20" stroke="#444" stroke-width="0.55" />
<line x1="135.44" y1="66.80" x2="135.44" y2="68.20" stroke="#444" stroke-width="0.55" />
<line x1="148.38" y1="66.80" x2="148.38" y2="68.20" stroke="#444" stroke-width="0.55" />
<line x1="161.32" y1="66.20" x2="161.32" y2="68.20" stroke="#444" stroke-width="0.55" />
<line x1="174.27" y1="66.80" x2="174.27" y2="68.20" stroke="#444" stroke-width="0.55" />
<line x1="187.21" y1="66.80" x2="187.21" y2="68.20" stroke="#444" stroke-width="0.55" />
<line x1="200.16" y1="66.80" x2="200.16" y2="68.20" stroke="#444" stroke-width="0.55" />
<line x1="213.10" y1="66.80" x2="213.10" y2="68.20" stroke="#444" stroke-width="0.55" />
<line x1="226.05" y1="62.60" x2="226.05" y2="68.20" stroke="#666" stroke-width="0.5" />
<text x="226.55" y="66.80" font-size="4.2" fill="#444" textLength="16.40" lengthAdjust="spacingAndGlyphs" >4500 mm</text>
<line x1="238.99" y1="66.80" x2="238.99" y2="68.20" stroke="#444" stroke-width="0.55" />
<line x1="251.94" y1="66.80" x2="251.94" y2="68.20" stroke="#444" stroke-width="0.55" />
<line x1="264.88" y1="66.80" x2="264.88" y2="68.20" stroke="#444" stroke-width="0.55" />
<line x1="277.83" y1="66.80" x2="277.83" y2="68.20" stroke="#444" stroke-width="0.55" />
<line x1="290.77" y1="66.20" x2="290.77" y2="68.20" stroke="#444" stroke-width="0.55" />
<line x1="303.72" y1="66.80" x2="303.72" y2="68.20" stroke="#444" stroke-width="0.55" />
<line x1="316.66" y1="66.80" x2="316.66" y2="68.20" stroke="#444" stroke-width="0.55" />
<line x1="329.61" y1="66.80" x2="329.61" y2="68.20" stroke="#444" stroke-width="0.55" />
<line x1="342.55" y1="66.80" x2="342.55" y2="68.20" stroke="#444" stroke-width="0.55" />
<line x1="355.50" y1="62.60" x2="355.50" y2="68.20" stroke="#666" stroke-width="0.5" />
<text x="356.00" y="66.80" font-size="4.2" fill="#444" textLength="16.40" lengthAdjust="spacingAndGlyphs" >4600 mm</text>
<line x1="368.44" y1="66.80" x2="368.44" y2="68.20" stroke="#444" stroke-width="0.55" />
<line x1="381.39" y1="66.80" x2="381.39" y2="68.20" stroke="#444" stroke-width="0.55" />
<line x1="394.34" y1="66.80" x2="394.34" y2="68.20" stroke="#444" stroke-width="0.55" />
<line x1="407.28" y1="66.80" x2="407.28" y2="68.20" stroke="#444" stroke-width="0.55" />
<line x1="420.22" y1="66.20" x2="420.22" y2="68.20" stroke="#444" stroke-width="0.55" />
<line x1="433.17" y1="66.80" x2="433.17" y2="68.20" stroke="#444" stroke-width="0.55" />
<line x1="446.12" y1="66.80" x2="446.12" y2="68.20" stroke="#444" stroke-width="0.55" />
<line x1="459.06" y1="66.80" x2="459.06" y2="68.20" stroke="#444" stroke-width="0.55" />
<line x1="472.00" y1="66.80" x2="472.00" y2="68.20" stroke="#444" stroke-width="0.55" />
<line x1="484.95" y1="62.60" x2="484.95" y2="68.20" stroke="#666" stroke-width="0.5" />
<text x="485.45" y="66.80" font-size="4.2" fill="#444" textLength="16.40" lengthAdjust="spacingAndGlyphs" >4700 mm</text>
<line x1="497.89" y1="66.80" x2="497.89" y2="68.20" stroke="#444" stroke-width="0.55" />
<line x1="510.84" y1="66.80" x2="510.84" y2="68.20" stroke="#444" stroke-width="0.55" />
<line x1="523.78" y1="66.80" x2="523.78" y2="68.20" stroke="#444" stroke-width="0.55" />
<line x1="536.73" y1="66.80" x2="536.73" y2="68.20" stroke="#444" stroke-width="0.55" />
<line x1="549.67" y1="66.20" x2="549.67" y2="68.20" stroke="#444" stroke-width="0.55" />
<line x1="562.62" y1="66.80" x2="562.62" y2="68.20" stroke="#444" stroke-width="0.55" />
<line x1="575.56" y1="66.80" x2="575.56" y2="68.20" stroke="#444" stroke-width="0.55" />
<line x1="588.51" y1="66.80" x2="588.51" y2="68.20" stroke="#444" stroke-width="0.55" />
<line x1="601.45" y1="66.80" x2="601.45" y2="68.20" stroke="#444" stroke-width="0.55" />
<line x1="614.40" y1="62.60" x2="614.40" y2="68.20" stroke="#666" stroke-width="0.5" />
<text x="614.90" y="66.80" font-size="4.2" fill="#444" textLength="16.40" lengthAdjust="spacingAndGlyphs" >4800 mm</text>
<line x1="627.35" y1="66.80" x2="627.35" y2="68.20" stroke="#444" stroke-width="0.55" />
<line x1="640.29" y1="66.80" x2="640.29" y2="68.20" stroke="#444" stroke-width="0.55" />
<line x1="653.24" y1="66.80" x2="653.24" y2="68.20" stroke="#444" stroke-width="0.55" />
<line x1="666.18" y1="66.80" x2="666.18" y2="68.20" stroke="#444" stroke-width="0.55" />
<line x1="679.12" y1="66.20" x2="679.12" y2="68.20" stroke="#444" stroke-width="0.55" />
<line x1="692.07" y1="66.80" x2="692.07" y2="68.20" stroke="#444" stroke-width="0.55" />
<line x1="705.01" y1="66.80" x2="705.01" y2="68.20" stroke="#444" stroke-width="0.55" />
<line x1="717.96" y1="66.80" x2="717.96" y2="68.20" stroke="#444" stroke-width="0.55" />
<line x1="730.90" y1="66.80" x2="730.90" y2="68.20" stroke="#444" stroke-width="0.55" />
<line x1="743.85" y1="62.60" x2="743.85" y2="68.20" stroke="#666" stroke-width="0.5" />
<text x="744.35" y="66.80" font-size="4.2" fill="#444" textLength="16.40" lengthAdjust="spacingAndGlyphs" >4900 mm</text>
<line x1="756.79" y1="66.80" x2="756.79" y2="68.20" stroke="#444" stroke-width="0.55" />
<line x1="769.74" y1="66.80" x2="769.74" y2="68.20" stroke="#444" stroke-width="0.55" />
<line x1="782.68" y1="66.80" x2="782.68" y2="68.20" stroke="#444" stroke-width="0.55" />
<line x1="795.63" y1="66.80" x2="795.63" y2="68.20" stroke="#444" stroke-width="0.55" />
<line x1="808.57" y1="66.20" x2="808.57" y2="68.20" stroke="#444" stroke-width="0.55" />
<line x1="821.52" y1="66.80" x2="821.52" y2="68.20" stroke="#444" stroke-width="0.55" />
<line x1="834.47" y1="66.80" x2="834.47" y2="68.20" stroke="#444" stroke-width="0.55" />
<line x1="847.41" y1="66.80" x2="847.41" y2="68.20" stroke="#444" stroke-width="0.55" />
<line x1="860.35" y1="66.80" x2="860.35" y2="68.20" stroke="#444" stroke-width="0.55" />
<line x1="873.30" y1="62.60" x2="873.30" y2="68.20" stroke="#666" stroke-width="0.5" />
<text x="873.80" y="66.80" font-size="4.2" fill="#444" textLength="16.40" lengthAdjust="spacingAndGlyphs" >5000 mm</text>
<line x1="336.20" y1="62.60" x2="336.20" y2="68.20" stroke="#e020e0" stroke-width="0.6" />
<rect x="24.50" y="68.40" width="5.80" height="446.00" fill="#f3f3f3" />
<line x1="30.30" y1="68.30" x2="30.30" y2="514.00" stroke="#2a2a2a" stroke-width="0.8" />
<line x1="24.40" y1="68.40" x2="24.40" y2="514.00" stroke="#e0e0e0" stroke-width="0.4" />
<line x1="28.80" y1="81.69" x2="30.20" y2="81.69" stroke="#444" stroke-width="0.55" />
<line x1="28.80" y1="94.64" x2="30.20" y2="94.64" stroke="#444" stroke-width="0.55" />
<line x1="28.80" y1="107.59" x2="30.20" y2="107.59" stroke="#444" stroke-width="0.55" />
<line x1="28.80" y1="120.53" x2="30.20" y2="120.53" stroke="#444" stroke-width="0.55" />
<line x1="28.20" y1="133.47" x2="30.20" y2="133.47" stroke="#444" stroke-width="0.55" />
<line x1="28.80" y1="146.42" x2="30.20" y2="146.42" stroke="#444" stroke-width="0.55" />
<line x1="28.80" y1="159.37" x2="30.20" y2="159.37" stroke="#444" stroke-width="0.55" />
<line x1="28.80" y1="172.31" x2="30.20" y2="172.31" stroke="#444" stroke-width="0.55" />
<line x1="28.80" y1="185.25" x2="30.20" y2="185.25" stroke="#444" stroke-width="0.55" />
<line x1="24.60" y1="198.20" x2="30.20" y2="198.20" stroke="#666" stroke-width="0.5" />
<text font-size="4.2" fill="#444" textLength="15.8" lengthAdjust="spacingAndGlyphs" transform="translate(29.2 196.50) rotate(-90)">1900 mm</text>
<line x1="28.80" y1="211.14" x2="30.20" y2="211.14" stroke="#444" stroke-width="0.55" />
<line x1="28.80" y1="224.09" x2="30.20" y2="224.09" stroke="#444" stroke-width="0.55" />
<line x1="28.80" y1="237.03" x2="30.20" y2="237.03" stroke="#444" stroke-width="0.55" />
<line x1="28.80" y1="249.98" x2="30.20" y2="249.98" stroke="#444" stroke-width="0.55" />
<line x1="28.20" y1="262.92" x2="30.20" y2="262.92" stroke="#444" stroke-width="0.55" />
<line x1="28.80" y1="275.87" x2="30.20" y2="275.87" stroke="#444" stroke-width="0.55" />
<line x1="28.80" y1="288.81" x2="30.20" y2="288.81" stroke="#444" stroke-width="0.55" />
<line x1="28.80" y1="301.76" x2="30.20" y2="301.76" stroke="#444" stroke-width="0.55" />
<line x1="28.80" y1="314.70" x2="30.20" y2="314.70" stroke="#444" stroke-width="0.55" />
<line x1="24.60" y1="327.65" x2="30.20" y2="327.65" stroke="#666" stroke-width="0.5" />
<text font-size="4.2" fill="#444" textLength="15.8" lengthAdjust="spacingAndGlyphs" transform="translate(29.2 325.95) rotate(-90)">1800 mm</text>
<line x1="28.80" y1="340.59" x2="30.20" y2="340.59" stroke="#444" stroke-width="0.55" />
<line x1="28.80" y1="353.54" x2="30.20" y2="353.54" stroke="#444" stroke-width="0.55" />
<line x1="28.80" y1="366.49" x2="30.20" y2="366.49" stroke="#444" stroke-width="0.55" />
<line x1="28.80" y1="379.43" x2="30.20" y2="379.43" stroke="#444" stroke-width="0.55" />
<line x1="28.20" y1="392.38" x2="30.20" y2="392.38" stroke="#444" stroke-width="0.55" />
<line x1="28.80" y1="405.32" x2="30.20" y2="405.32" stroke="#444" stroke-width="0.55" />
<line x1="28.80" y1="418.26" x2="30.20" y2="418.26" stroke="#444" stroke-width="0.55" />
<line x1="28.80" y1="431.21" x2="30.20" y2="431.21" stroke="#444" stroke-width="0.55" />
<line x1="28.80" y1="444.15" x2="30.20" y2="444.15" stroke="#444" stroke-width="0.55" />
<line x1="24.60" y1="457.10" x2="30.20" y2="457.10" stroke="#666" stroke-width="0.5" />
<text font-size="4.2" fill="#444" textLength="15.8" lengthAdjust="spacingAndGlyphs" transform="translate(29.2 455.40) rotate(-90)">1700 mm</text>
<line x1="28.80" y1="470.04" x2="30.20" y2="470.04" stroke="#444" stroke-width="0.55" />
<line x1="28.80" y1="482.99" x2="30.20" y2="482.99" stroke="#444" stroke-width="0.55" />
<line x1="28.80" y1="495.94" x2="30.20" y2="495.94" stroke="#444" stroke-width="0.55" />
<line x1="28.80" y1="508.88" x2="30.20" y2="508.88" stroke="#444" stroke-width="0.55" />
<line x1="24.60" y1="510.30" x2="30.20" y2="510.30" stroke="#e020e0" stroke-width="0.6" />
<rect x="30.60" y="68.60" width="855.90" height="445.20" fill="#ffffff" />
<path d="M30.6 94.4 H663.5 V68.6" stroke="#222" fill="none" stroke-width="0.62" />
<path d="M30.6 164 H663.5 V513.8" stroke="#222" fill="none" stroke-width="0.62" />
<path d="M95.2 182 H86.2 A44.5 44.5 0 0 0 41.7 226.5 V385 A44.4 44.4 0 0 0 86.1 429.4 H95.2 V425.6 H222.4 V429.5 L233.4 426.9 L231.7 423.5 L234.6 423 L235.6 421.8 L248.6 370.4 H244.9 V366 H249.4 Q251.6 336 251.9 307.9 H247.2 V303.9 H251.9 Q251.4 272 249.4 245.7 H245.3 L244.3 242.4 L248.7 241.1 L235.9 189.2 L234.6 190.2 L231.5 188 L233 185.1 L222.4 182.2 V186.4 H95.2 Z" stroke="#ff2a2a" fill="none" stroke-width="0.56" />
<path d="M95.2 199.6 H78.8 A24 24 0 0 0 54.9 223.6 V380 A33 33 0 0 0 87.9 412.9 H95.2 V419.4 H97.7 V412.9 H220.2 V419.3 H222.7 V192.7 H220.2 V199.6 H97.7 V192.7 H95.2 Z" stroke="#ff2a2a" fill="none" stroke-width="0.56" />
<circle cx="228.30" cy="242.60" r="2.1" stroke="#333" fill="none" stroke-width="0.55" />
<circle cx="228.30" cy="369.50" r="2.1" stroke="#333" fill="none" stroke-width="0.55" />
<rect x="324.85" y="200.05" width="76.85" height="213.65" fill="none" stroke="#ff2a2a" stroke-width="0.56" rx="11" />
<rect x="437.60" y="200.05" width="91.10" height="213.65" fill="none" stroke="#ff2a2a" stroke-width="0.56" rx="11" />
<rect x="415.90" y="187.20" width="3.00" height="45.20" fill="none" stroke="#ff2a2a" stroke-width="0.56" rx="0.6" />
<rect x="416.20" y="381.20" width="2.70" height="45.20" fill="none" stroke="#ff2a2a" stroke-width="0.56" rx="0.6" />
<circle cx="555.20" cy="244.60" r="6.5" stroke="#ff2a2a" fill="none" stroke-width="0.56" />
<circle cx="556.20" cy="306.80" r="6.5" stroke="#ff2a2a" fill="none" stroke-width="0.56" />
<circle cx="554.80" cy="368.80" r="6.5" stroke="#ff2a2a" fill="none" stroke-width="0.56" />
<path d="M278.4 186.6 H280.8 V189.6 H287.4 V182.8 H303.5 V189.6 H311.5 V186.9 H405.3 V182.8 H444.6 V186.9 H541.1 V231.8 H543.5 V182.8 L554.6 186 L553 188.8 L556 190.8 L557.2 189.8 L569.6 241.3 L566.4 242.6 L567 246.2 H570.4 Q572.6 275 573.2 304.4 H568.6 V308.4 H573.2 Q572.8 340 570.8 366.4 H566.4 V370.8 H570 L557.4 420.6 L556.2 422.4 L553.4 423 L555 426.6 L543.5 430.3 V381.2 H541.1 V426.4 H444.7 V430.3 H405.6 V426.4 H311.8 V423.2 H303.1 V430.3 H287.6 V423.2 H280.6 V426.2 H278.4 Z" stroke="#ff30ff" fill="none" stroke-width="0.66" />
<rect x="276.95" y="184.55" width="3.30" height="3.30" fill="#0808c4" />
<rect x="279.25" y="186.95" width="3.30" height="3.30" fill="#0808c4" />
<rect x="285.75" y="187.95" width="3.30" height="3.30" fill="#0808c4" />
<rect x="285.75" y="181.15" width="3.30" height="3.30" fill="#0808c4" />
<rect x="301.85" y="181.15" width="3.30" height="3.30" fill="#0808c4" />
<rect x="301.85" y="187.95" width="3.30" height="3.30" fill="#0808c4" />
<rect x="309.95" y="184.95" width="3.30" height="3.30" fill="#0808c4" />
<rect x="309.95" y="187.15" width="3.30" height="3.30" fill="#0808c4" />
<rect x="403.65" y="181.15" width="3.30" height="3.30" fill="#0808c4" />
<rect x="403.65" y="184.95" width="3.30" height="3.30" fill="#0808c4" />
<rect x="442.95" y="181.15" width="3.30" height="3.30" fill="#0808c4" />
<rect x="442.95" y="184.95" width="3.30" height="3.30" fill="#0808c4" />
<rect x="538.95" y="184.95" width="3.30" height="3.30" fill="#0808c4" />
<rect x="541.75" y="184.95" width="3.30" height="3.30" fill="#0808c4" />
<rect x="541.75" y="180.95" width="3.30" height="3.30" fill="#0808c4" />
<rect x="539.35" y="230.15" width="3.30" height="3.30" fill="#0808c4" />
<rect x="542.15" y="230.15" width="3.30" height="3.30" fill="#0808c4" />
<rect x="551.75" y="184.75" width="3.30" height="3.30" fill="#0808c4" />
<rect x="553.15" y="186.75" width="3.30" height="3.30" fill="#0808c4" />
<rect x="554.75" y="188.55" width="3.30" height="3.30" fill="#0808c4" />
<rect x="551.35" y="187.75" width="3.30" height="3.30" fill="#0808c4" />
<rect x="565.35" y="240.95" width="3.30" height="3.30" fill="#0808c4" />
<rect x="568.55" y="240.95" width="3.30" height="3.30" fill="#0808c4" />
<rect x="565.35" y="244.35" width="3.30" height="3.30" fill="#0808c4" />
<rect x="568.55" y="244.35" width="3.30" height="3.30" fill="#0808c4" />
<rect x="567.55" y="303.35" width="3.30" height="3.30" fill="#0808c4" />
<rect x="570.95" y="303.35" width="3.30" height="3.30" fill="#0808c4" />
<rect x="567.55" y="306.75" width="3.30" height="3.30" fill="#0808c4" />
<rect x="570.95" y="306.75" width="3.30" height="3.30" fill="#0808c4" />
<rect x="564.75" y="365.15" width="3.30" height="3.30" fill="#0808c4" />
<rect x="568.15" y="365.15" width="3.30" height="3.30" fill="#0808c4" />
<rect x="564.75" y="368.75" width="3.30" height="3.30" fill="#0808c4" />
<rect x="568.15" y="368.75" width="3.30" height="3.30" fill="#0808c4" />
<rect x="553.95" y="420.35" width="3.30" height="3.30" fill="#0808c4" />
<rect x="551.95" y="421.95" width="3.30" height="3.30" fill="#0808c4" />
<rect x="552.95" y="424.55" width="3.30" height="3.30" fill="#0808c4" />
<rect x="555.15" y="418.95" width="3.30" height="3.30" fill="#0808c4" />
<rect x="539.15" y="379.55" width="3.30" height="3.30" fill="#0808c4" />
<rect x="541.75" y="379.55" width="3.30" height="3.30" fill="#0808c4" />
<rect x="539.35" y="424.55" width="3.30" height="3.30" fill="#0808c4" />
<rect x="541.75" y="424.55" width="3.30" height="3.30" fill="#0808c4" />
<rect x="541.95" y="428.55" width="3.30" height="3.30" fill="#0808c4" />
<rect x="443.05" y="424.75" width="3.30" height="3.30" fill="#0808c4" />
<rect x="443.05" y="428.65" width="3.30" height="3.30" fill="#0808c4" />
<rect x="403.95" y="424.75" width="3.30" height="3.30" fill="#0808c4" />
<rect x="403.95" y="428.65" width="3.30" height="3.30" fill="#0808c4" />
<rect x="310.15" y="421.75" width="3.30" height="3.30" fill="#0808c4" />
<rect x="310.15" y="424.35" width="3.30" height="3.30" fill="#0808c4" />
<rect x="301.45" y="421.55" width="3.30" height="3.30" fill="#0808c4" />
<rect x="301.45" y="428.65" width="3.30" height="3.30" fill="#0808c4" />
<rect x="285.95" y="421.55" width="3.30" height="3.30" fill="#0808c4" />
<rect x="285.95" y="428.65" width="3.30" height="3.30" fill="#0808c4" />
<rect x="279.05" y="422.15" width="3.30" height="3.30" fill="#0808c4" />
<rect x="276.75" y="424.55" width="3.30" height="3.30" fill="#0808c4" />
<rect x="278.75" y="424.55" width="3.30" height="3.30" fill="#0808c4" />
<rect x="276.65" y="304.75" width="3.30" height="3.30" fill="#0808c4" />
<rect x="886.50" y="68.60" width="9.20" height="445.40" fill="#f0f0f0" />
<rect x="887.60" y="141.00" width="6.60" height="25.60" fill="#c8c8c8" />
<path d="M888.9 73.8 L891 71.6 L893.1 73.8" stroke="#555" fill="none" stroke-width="0.7" />
<path d="M888.9 509.2 L891 511.4 L893.1 509.2" stroke="#555" fill="none" stroke-width="0.7" />
<rect x="24.40" y="513.90" width="871.40" height="9.40" fill="#f0f0f0" />
<rect x="751.00" y="515.40" width="36.60" height="7.00" fill="#cdcdcd" />
<path d="M881.6 516.6 L883.8 518.7 L881.6 520.8" stroke="#555" fill="none" stroke-width="0.7" />
<path d="M142.2 516.6 L140 518.7 L142.2 520.8" stroke="#555" fill="none" stroke-width="0.7" />
<line x1="136.30" y1="514.50" x2="136.30" y2="523.00" stroke="#999" stroke-width="0.6" />
<line x1="30.60" y1="513.90" x2="886.50" y2="513.90" stroke="#dcdcdc" stroke-width="0.5" />
<rect x="24.50" y="513.90" width="5.80" height="8.80" fill="#f3f3f3" />
<line x1="30.30" y1="513.90" x2="30.30" y2="522.60" stroke="#2a2a2a" stroke-width="0.8" />
<rect x="32.40" y="514.20" width="30.20" height="7.90" fill="#fdfdfd" />
<path d="M32.4 522.1 H62.8 V514.4" stroke="#8a8a8a" fill="none" stroke-width="0.6" />
<circle cx="38.30" cy="518.20" r="1.5" stroke="#222" fill="#999" stroke-width="0.8" />
<text x="42.50" y="520.40" font-size="6.4" fill="#111" textLength="16.30" lengthAdjust="spacingAndGlyphs" >Model</text>
<rect x="64.40" y="514.40" width="28.70" height="7.80" fill="#dcdcdc" stroke="#b0b0b0" stroke-width="0.5" />
<path d="M67 516 H69 L70 517 V520.6 H67 Z" stroke="#445" fill="#fff" stroke-width="0.5" />
<text x="72.50" y="520.40" font-size="6.4" fill="#a4a4a4" textLength="17.50" lengthAdjust="spacingAndGlyphs" >Uklad1</text>
<rect x="95.60" y="514.40" width="29.40" height="7.80" fill="#dcdcdc" stroke="#b0b0b0" stroke-width="0.5" />
<path d="M98.4 516 H100.4 L101.4 517 V520.6 H98.4 Z" stroke="#445" fill="#fff" stroke-width="0.5" />
<text x="103.80" y="520.40" font-size="6.4" fill="#a4a4a4" textLength="18.10" lengthAdjust="spacingAndGlyphs" >Uklad2</text>
<rect x="0.00" y="523.40" width="1024.00" height="20.40" fill="#f0f0f0" />
<line x1="0.00" y1="523.30" x2="1024.00" y2="523.30" stroke="#fbfbfb" stroke-width="0.7" />
<path d="M6.1 531.6 L10.5 536 M10.5 531.6 L6.1 536" stroke="#e01818" fill="none" stroke-width="1.0" />
<rect x="14.00" y="531.20" width="5.80" height="4.80" fill="#7a7a98" stroke="#2a2a90" stroke-width="0.6" />
<line x1="14.00" y1="532.40" x2="19.80" y2="532.40" stroke="#2a2a90" stroke-width="0.7" />
<line x1="22.60" y1="525.00" x2="22.60" y2="542.60" stroke="#cfcfcf" stroke-width="0.5" />
<ellipse cx="27.7" cy="529.9" rx="1.6" ry="1.2" fill="#1a22c8"/>
<path d="M27.6 528.8 Q28.6 526.8 29.6 528" stroke="#223" fill="none" stroke-width="0.6" />
<text x="31.30" y="530.70" font-size="6.4" fill="#1a1a1a" textLength="19.50" lengthAdjust="spacingAndGlyphs" >Delta X</text>
<ellipse cx="61.5" cy="529.9" rx="1.6" ry="1.2" fill="#1a22c8"/>
<path d="M61.4 528.8 Q62.4 526.8 63.4 528" stroke="#223" fill="none" stroke-width="0.6" />
<text x="65.00" y="530.70" font-size="6.4" fill="#1a1a1a" textLength="19.50" lengthAdjust="spacingAndGlyphs" >Delta Y</text>
<ellipse cx="95.2" cy="529.9" rx="1.6" ry="1.2" fill="#1a22c8"/>
<path d="M95.1 528.8 Q96.1 526.8 97.1 528" stroke="#223" fill="none" stroke-width="0.6" />
<text x="99.30" y="530.70" font-size="6.4" fill="#1a1a1a" textLength="23.70" lengthAdjust="spacingAndGlyphs" >Divide to</text>
<ellipse cx="129.2" cy="529.9" rx="1.6" ry="1.2" fill="#1a22c8"/>
<path d="M129.1 528.8 Q130.1 526.8 131.1 528" stroke="#223" fill="none" stroke-width="0.6" />
<text x="133.00" y="530.70" font-size="6.4" fill="#1a1a1a" textLength="17.50" lengthAdjust="spacingAndGlyphs" >Radius</text>
<rect x="25.00" y="533.30" width="32.00" height="8.80" fill="#fff" stroke="#dadada" stroke-width="0.5" />
<text x="26.90" y="539.90" font-size="6.4" fill="#333" textLength="15.00" lengthAdjust="spacingAndGlyphs" >0 mm</text>
<rect x="59.30" y="533.30" width="31.20" height="8.80" fill="#fff" stroke="#dadada" stroke-width="0.5" />
<text x="61.00" y="539.90" font-size="6.4" fill="#333" textLength="15.00" lengthAdjust="spacingAndGlyphs" >0 mm</text>
<rect x="93.30" y="533.30" width="31.20" height="8.80" fill="#fff" stroke="#dadada" stroke-width="0.5" />
<text x="95.40" y="539.90" font-size="6.4" fill="#333" textLength="3.40" lengthAdjust="spacingAndGlyphs" >2</text>
<rect x="126.80" y="533.30" width="32.00" height="8.80" fill="#fff" stroke="#dadada" stroke-width="0.5" />
<text x="129.00" y="539.90" font-size="6.4" fill="#333" textLength="15.00" lengthAdjust="spacingAndGlyphs" >0 mm</text>
<rect x="117.60" y="533.60" width="6.60" height="8.20" fill="#f0f0f0" stroke="#d0d0d0" stroke-width="0.3" />
<path d="M119.6 536.6 L120.9 535 L122.2 536.6 Z" stroke="#111" fill="#111" stroke-width="0.3" />
<path d="M119.6 538.8 L120.9 540.4 L122.2 538.8 Z" stroke="#111" fill="#111" stroke-width="0.3" />
<line x1="161.30" y1="525.00" x2="161.30" y2="542.60" stroke="#cfcfcf" stroke-width="0.5" />
<path d="M165.6 531 V535.6 L166.7 534.6 L167.5 536.4 L168.3 536 L167.5 534.3 H169 Z" stroke="#777" fill="#888" stroke-width="0.3" />
<path d="M174 531.4 V534.6 L175 533.8 L175.8 535.2" stroke="#c0c0c0" fill="none" stroke-width="0.6" />
<path d="M176.4 532 H177.6 M176.8 535.6 L177.8 536.6" stroke="#c4c4c4" fill="none" stroke-width="0.6" />
<rect x="181.20" y="531.40" width="5.80" height="4.60" fill="#aab4f0" />
<path d="M182.2 532.6 H186 M182.2 534.8 H186" stroke="#555" fill="none" stroke-width="0.9" />
<rect x="183.40" y="531.80" width="1.40" height="3.80" fill="#667" />
<path d="M190.6 535.6 L193 531.6 L195.4 535.6 Z" stroke="#667" fill="#8a9" stroke-width="0.4" />
<path d="M193 531.6 L195.6 534.2" stroke="#2ab0c0" fill="none" stroke-width="0.9" />
<line x1="190.40" y1="535.80" x2="195.20" y2="535.80" stroke="#c04040" stroke-width="0.6" />
<path d="M199.8 531.4 L201.2 535.6" stroke="#2a3ae0" fill="none" stroke-width="0.8" />
<path d="M201.2 535.6 L203.2 531.6" stroke="#e03030" fill="none" stroke-width="0.8" />
<path d="M201.2 535.6 L202.6 536" stroke="#2a2" fill="none" stroke-width="0.7" />
<path d="M208.4 536 V531.8 L210.5 534.4 L212.6 531.8 V536" stroke="#223" fill="none" stroke-width="0.8" />
<circle cx="208.20" cy="531.20" r="0.8" stroke="none" fill="#e02020" stroke-width="0.5" />
<circle cx="212.80" cy="531.00" r="0.7" stroke="none" fill="#2a3ae0" stroke-width="0.5" />
<circle cx="208.20" cy="536.20" r="0.7" stroke="none" fill="#2a3ae0" stroke-width="0.5" />
<rect x="215.10" y="529.00" width="8.70" height="8.70" fill="#c4dcf4" />
<path d="M217 535.8 Q218.6 535.4 219.6 533.4 L221.6 531.2 M219.4 533.6 L222 535.8" stroke="#14205a" fill="none" stroke-width="1.0" />
<path d="M226.2 532.2 Q228.2 533.6 226.2 535.2 M230.8 532.2 Q228.8 533.6 230.8 535.2" stroke="#c81818" fill="none" stroke-width="0.9" />
<line x1="227.40" y1="533.70" x2="229.60" y2="533.70" stroke="#c81818" stroke-width="0.7" />
<ellipse cx="237.2" cy="533.6" rx="2.4" ry="1.5" fill="none" stroke="#c82020" stroke-width="0.8"/>
<line x1="236.20" y1="533.60" x2="238.20" y2="533.60" stroke="#445" stroke-width="0.6" />
<path d="M243.2 536 L245.4 531.4 L247 536 M244 534.4 H246.6" stroke="#111" fill="none" stroke-width="1.0" />
<path d="M246.6 533 L248.8 534.2 L246.8 535.6 Z" stroke="none" fill="#1a2ae0" stroke-width="0.5" />
<path d="M252.8 534.4 L254.4 532.8000000000001 L256.0 534.0" stroke="#cfcfcf" fill="none" stroke-width="0.6" />
<path d="M261.9 534.4 L263.5 532.8000000000001 L265.1 534.0" stroke="#cfcfcf" fill="none" stroke-width="0.6" />
<path d="M270.7 534.4 L272.3 532.8000000000001 L273.90000000000003 534.0" stroke="#cfcfcf" fill="none" stroke-width="0.6" />
<path d="M279.4 534.4 L281 532.8000000000001 L282.6 534.0" stroke="#cfcfcf" fill="none" stroke-width="0.6" />
<path d="M288.2 534.4 L289.8 532.8000000000001 L291.40000000000003 534.0" stroke="#cfcfcf" fill="none" stroke-width="0.6" />
<path d="M298.2 532.2 V535 M297.4 533.6 H299" stroke="#d8d8d8" fill="none" stroke-width="0.5" />
<path d="M306.4 535.2 L307.8 531.8 L309.2 535.2 M306.8 534.2 H308.8" stroke="#bdbdbd" fill="none" stroke-width="0.6" />
<path d="M315.4 533 V535 M316.4 533.6 V535" stroke="#d4d4d4" fill="none" stroke-width="0.5" />
<rect x="321.00" y="529.30" width="8.70" height="8.20" fill="#c0daf2" />
<path d="M323 533.8 H325 M325.8 533.8 H327.6" stroke="#8aa8cc" fill="none" stroke-width="0.7" />
<rect x="298.25" y="524.05" width="18.30" height="16.60" fill="none" stroke="#e5142c" stroke-width="1.7" />
<line x1="0.00" y1="543.80" x2="1024.00" y2="543.80" stroke="#d6d6d6" stroke-width="0.7" />
<text x="3.50" y="551.80" font-size="6.4" fill="#222" textLength="144.00" lengthAdjust="spacingAndGlyphs" >Select a handle(s) for operation/Select a new object(s)</text>
<text x="791.30" y="551.90" font-size="6.4" fill="#222" textLength="13.70" lengthAdjust="spacingAndGlyphs" >SNAP</text>
<text x="809.30" y="551.90" font-size="6.4" fill="#222" textLength="11.20" lengthAdjust="spacingAndGlyphs" >GEO</text>
<rect x="832.50" y="545.60" width="37.50" height="9.00" fill="#fff" stroke="#333" stroke-width="0.8" />
<clipPath id="c832"><rect x="832.5" y="545" width="36.7" height="10"/></clipPath>
<text x="834.30" y="552.50" font-size="6.4" fill="#222" textLength="34.60" lengthAdjust="spacingAndGlyphs" clip-path="url(#c832)">4584,9188 m</text>
<rect x="828.50" y="546.00" width="2.60" height="2.60" fill="#fff" stroke="#333" stroke-width="0.5" />
<text x="829.80" y="554.60" font-size="3.4" fill="#555" text-anchor="middle" >x</text>
<rect x="879.30" y="545.60" width="38.00" height="9.00" fill="#fff" stroke="#333" stroke-width="0.8" />
<clipPath id="c879"><rect x="879.3" y="545" width="37.2" height="10"/></clipPath>
<text x="881.80" y="552.50" font-size="6.4" fill="#222" textLength="34.60" lengthAdjust="spacingAndGlyphs" clip-path="url(#c879)">1658,5971 m</text>
<rect x="875.00" y="546.00" width="2.60" height="2.60" fill="#fff" stroke="#333" stroke-width="0.5" />
<text x="876.30" y="554.60" font-size="3.4" fill="#555" text-anchor="middle" >Y</text>
<rect x="926.00" y="545.60" width="37.50" height="9.00" fill="#fff" stroke="#333" stroke-width="0.8" />
<clipPath id="c926"><rect x="926" y="545" width="36.7" height="10"/></clipPath>
<text x="928.20" y="552.50" font-size="6.4" fill="#aaa" textLength="14.40" lengthAdjust="spacingAndGlyphs" clip-path="url(#c926)">0 mm</text>
<rect x="921.70" y="546.00" width="2.60" height="2.60" fill="#fff" stroke="#333" stroke-width="0.5" />
<text x="923.00" y="554.60" font-size="3.4" fill="#555" text-anchor="middle" >Z</text>
<text x="968.00" y="551.90" font-size="6.4" fill="#222" textLength="16.80" lengthAdjust="spacingAndGlyphs" >2568%</text>
<text x="996.40" y="551.90" font-size="6.4" fill="#222" textLength="13.40" lengthAdjust="spacingAndGlyphs" >12:19</text>
<defs><linearGradient id="gp" x1="0" y1="0" x2="0" y2="1"><stop offset="0" stop-color="#d3deed"/><stop offset="0.57" stop-color="#c4d3e6"/><stop offset="1" stop-color="#b1c5de"/></linearGradient><linearGradient id="gh" x1="0" y1="0" x2="0" y2="1"><stop offset="0" stop-color="#bfd0e6"/><stop offset="1" stop-color="#dfe8f4"/></linearGradient><linearGradient id="gs" x1="0" y1="0" x2="1" y2="0.15"><stop offset="0" stop-color="#fafbfd"/><stop offset="0.5" stop-color="#eef2f8"/><stop offset="1" stop-color="#e4eaf4"/></linearGradient></defs>
<rect x="895.80" y="61.80" width="128.20" height="462.00" fill="#f0f0f0" />
<rect x="897.40" y="62.30" width="113.20" height="449.60" fill="url(#gp)" />
<rect x="897.40" y="62.30" width="113.20" height="11.00" fill="url(#gh)" />
<line x1="897.40" y1="62.30" x2="1010.60" y2="62.30" stroke="#858b94" stroke-width="0.8" />
<text x="898.70" y="70.20" font-size="6.9" fill="#333" textLength="14.00" lengthAdjust="spacingAndGlyphs" >Tools</text>
<line x1="897.20" y1="62.30" x2="897.20" y2="73.00" stroke="#8c9ab0" stroke-width="0.7" />
<path d="M996.8 70.6 L999 68.4" stroke="#888" fill="none" stroke-width="0.7" />
<path d="M998 66.8 L1000.6 69.4 L1002.6 67.4 L1000.6 65 Z" stroke="#8a8a8a" fill="#e8e8e8" stroke-width="0.7" />
<rect x="1004.40" y="65.30" width="5.60" height="4.90" fill="#949494" />
<path d="M1005.8 66.4 L1008.6 69.1 M1008.6 66.4 L1005.8 69.1" stroke="#fff" fill="none" stroke-width="0.8" />
<line x1="1010.90" y1="62.30" x2="1010.90" y2="73.00" stroke="#9aa6b8" stroke-width="0.6" />
<rect x="897.80" y="73.30" width="112.40" height="11.60" fill="#ffffff" />
<path d="M900.2 76.2 V81.6 L901.5 80.4 L902.5 82.5 L903.4 82.1 L902.5 80.1 H904.2 Z" stroke="#222" fill="#555" stroke-width="0.5" />
<rect x="906.40" y="74.60" width="8.50" height="9.00" fill="#cce4f7" />
<path d="M908 82.6 L910.4 77.8 L912.8 81.4" stroke="#777" fill="none" stroke-width="0.7" />
<circle cx="909.90" cy="77.40" r="0.9" stroke="none" fill="#1a22e0" stroke-width="0.5" />
<path d="M911.6 80.4 L913 83 L913.6 81.2" stroke="#223" fill="#223" stroke-width="0.4" />
<circle cx="919.70" cy="79.00" r="2.8" stroke="#123" fill="#2a50c0" stroke-width="0.4" />
<path d="M918 78 Q919.6 76.4 921 78.2 Q920 80.4 918.6 80 Z" stroke="none" fill="#4ab04a" stroke-width="0.5" />
<rect x="926.40" y="75.00" width="39.10" height="9.20" fill="#fff" stroke="#c8c8c8" stroke-width="0.5" />
<text x="927.60" y="82.10" font-size="7" fill="#333" textLength="17.50" lengthAdjust="spacingAndGlyphs" >Sketch</text>
<rect x="958.80" y="75.30" width="6.50" height="8.60" fill="#e6e6e6" stroke="#aaa" stroke-width="0.4" />
<path d="M960.6 78.8 L962.1 80.4 L963.6 78.8" stroke="#555" fill="none" stroke-width="0.6" />
<ellipse cx="969.8" cy="80.4" rx="2.3" ry="2.2" fill="#f01010"/>
<path d="M968.6 77.4 L970.6 78.6 L972.4 77.2" stroke="#1a5a1a" fill="none" stroke-width="0.9" />
<path d="M971.6 79.6 L973.4 82.4" stroke="#111" fill="none" stroke-width="0.9" />
<rect x="898.00" y="86.20" width="112.00" height="10.60" fill="url(#gs)" />
<text x="902.90" y="94.90" font-size="7.0" fill="#1660ae" textLength="34.00" lengthAdjust="spacingAndGlyphs" font-weight="bold" >Snap Modes</text>
<circle cx="1004.95" cy="91.40" r="3.0" stroke="#cfdaea" fill="#ffffff" stroke-width="0.6" />
<path d="M1003.9 91.2 L1004.9 90.2 L1005.9 91.2 M1003.9 92.60000000000001 L1004.9 91.60000000000001 L1005.9 92.60000000000001" stroke="#2a78c4" fill="none" stroke-width="0.8" />
<rect x="898.00" y="96.80" width="112.00" height="40.20" fill="#f4f6fb" />
<rect x="898.00" y="138.20" width="112.00" height="10.00" fill="url(#gs)" />
<text x="902.90" y="146.30" font-size="7.0" fill="#1660ae" textLength="11.60" lengthAdjust="spacingAndGlyphs" font-weight="bold" >Line</text>
<circle cx="1004.95" cy="143.10" r="3.0" stroke="#cfdaea" fill="#ffffff" stroke-width="0.6" />
<path d="M1003.9 142.9 L1004.9 141.9 L1005.9 142.9 M1003.9 144.29999999999998 L1004.9 143.29999999999998 L1005.9 144.29999999999998" stroke="#2a78c4" fill="none" stroke-width="0.8" />
<rect x="898.00" y="148.20" width="112.00" height="28.60" fill="#f4f6fb" />
<rect x="898.00" y="177.80" width="112.00" height="10.20" fill="url(#gs)" />
<text x="902.90" y="186.10" font-size="7.0" fill="#1660ae" textLength="35.60" lengthAdjust="spacingAndGlyphs" font-weight="bold" >Circle/Ellipse</text>
<circle cx="1004.95" cy="182.80" r="3.0" stroke="#cfdaea" fill="#ffffff" stroke-width="0.6" />
<path d="M1003.9 182.60000000000002 L1004.9 181.60000000000002 L1005.9 182.60000000000002 M1003.9 184.0 L1004.9 183.0 L1005.9 184.0" stroke="#2a78c4" fill="none" stroke-width="0.8" />
<rect x="898.00" y="188.00" width="112.00" height="29.20" fill="#f4f6fb" />
<rect x="898.00" y="218.30" width="112.00" height="9.70" fill="url(#gs)" />
<text x="902.90" y="226.10" font-size="7.0" fill="#1660ae" textLength="9.60" lengthAdjust="spacingAndGlyphs" font-weight="bold" >Arc</text>
<circle cx="1004.95" cy="223.05" r="3.0" stroke="#cfdaea" fill="#ffffff" stroke-width="0.6" />
<path d="M1003.9 222.85000000000002 L1004.9 221.85000000000002 L1005.9 222.85000000000002 M1003.9 224.25 L1004.9 223.25 L1005.9 224.25" stroke="#2a78c4" fill="none" stroke-width="0.8" />
<rect x="898.00" y="228.00" width="112.00" height="28.80" fill="#f4f6fb" />
<rect x="898.00" y="258.20" width="112.00" height="9.40" fill="url(#gs)" />
<text x="902.90" y="265.70" font-size="7.0" fill="#1660ae" textLength="16.60" lengthAdjust="spacingAndGlyphs" font-weight="bold" >Curve</text>
<circle cx="1004.95" cy="262.80" r="3.0" stroke="#cfdaea" fill="#ffffff" stroke-width="0.6" />
<path d="M1003.9 262.59999999999997 L1004.9 261.59999999999997 L1005.9 262.59999999999997 M1003.9 263.99999999999994 L1004.9 262.99999999999994 L1005.9 263.99999999999994" stroke="#2a78c4" fill="none" stroke-width="0.8" />
<rect x="898.00" y="267.60" width="112.00" height="18.30" fill="#f4f6fb" />
<rect x="898.00" y="287.00" width="112.00" height="9.40" fill="url(#gs)" />
<text x="902.90" y="294.50" font-size="7.0" fill="#1660ae" textLength="33.40" lengthAdjust="spacingAndGlyphs" font-weight="bold" >Double Line</text>
<circle cx="1004.95" cy="291.60" r="3.0" stroke="#cfdaea" fill="#ffffff" stroke-width="0.6" />
<path d="M1003.9 290.4 L1004.9 291.4 L1005.9 290.4 M1003.9 291.79999999999995 L1004.9 292.79999999999995 L1005.9 291.79999999999995" stroke="#2a78c4" fill="none" stroke-width="0.8" />
<rect x="898.00" y="297.80" width="112.00" height="9.70" fill="url(#gs)" />
<text x="902.90" y="305.60" font-size="7.0" fill="#1660ae" textLength="25.00" lengthAdjust="spacingAndGlyphs" font-weight="bold" >Multiline</text>
<circle cx="1004.95" cy="302.55" r="3.0" stroke="#cfdaea" fill="#ffffff" stroke-width="0.6" />
<path d="M1003.9 301.34999999999997 L1004.9 302.34999999999997 L1005.9 301.34999999999997 M1003.9 302.74999999999994 L1004.9 303.74999999999994 L1005.9 302.74999999999994" stroke="#2a78c4" fill="none" stroke-width="0.8" />
<rect x="898.00" y="308.80" width="112.00" height="9.50" fill="url(#gs)" />
<text x="902.90" y="316.40" font-size="7.0" fill="#1660ae" textLength="30.40" lengthAdjust="spacingAndGlyphs" font-weight="bold" >Dimension</text>
<circle cx="1004.95" cy="313.45" r="3.0" stroke="#cfdaea" fill="#ffffff" stroke-width="0.6" />
<path d="M1003.9 312.25 L1004.9 313.25 L1005.9 312.25 M1003.9 313.65 L1004.9 314.65 L1005.9 313.65" stroke="#2a78c4" fill="none" stroke-width="0.8" />
<rect x="913.15" y="100.10" width="11.00" height="10.80" fill="#fbbf6a" stroke="#4a3590" stroke-width="0.7" />
<rect x="924.40" y="100.10" width="11.00" height="10.80" fill="#fbbf6a" stroke="#4a3590" stroke-width="0.7" />
<rect x="946.90" y="100.10" width="11.00" height="10.80" fill="#fbbf6a" stroke="#4a3590" stroke-width="0.7" />
<rect x="969.40" y="100.10" width="11.00" height="10.80" fill="#fbbf6a" stroke="#4a3590" stroke-width="0.7" />
<rect x="980.65" y="100.10" width="11.00" height="10.80" fill="#fbbf6a" stroke="#4a3590" stroke-width="0.7" />
<rect x="980.65" y="111.40" width="11.00" height="10.80" fill="#fbbf6a" stroke="#4a3590" stroke-width="0.7" />
<rect x="991.90" y="111.40" width="11.00" height="10.80" fill="#fbbf6a" stroke="#4a3590" stroke-width="0.7" />
<rect x="901.90" y="122.60" width="11.00" height="10.80" fill="#fbbf6a" stroke="#4a3590" stroke-width="0.7" />
<path d="M905.6 108.1 Q904.6 105.9 905.8 105.1 V103.3 Q906.8 102.7 907.6 103.5 Q909.0 103.1 909.6 104.5 V106.9 Q909.4 108.3 908.1999999999999 108.3 Z" stroke="#999" fill="#f6f6f6" stroke-width="0.5" />
<circle cx="909.80" cy="103.10" r="0.55" stroke="none" fill="#e33" stroke-width="0.5" />
<circle cx="904.80" cy="107.70" r="0.55" stroke="none" fill="#e33" stroke-width="0.5" />
<path d="M915.65 105.5 H921.25 M919.4499999999999 104.1 L921.4499999999999 105.5 L919.4499999999999 106.9" stroke="#4a2a10" fill="none" stroke-width="0.7" />
<circle cx="918.65" cy="105.50" r="0.8" stroke="none" fill="#3a1a08" stroke-width="0.5" />
<path d="M927.3 108.1 L930.5 103.7 M929.3 105.1 L932.9 107.1 M930.5 103.7 L931.9 102.5" stroke="#6a3a10" fill="none" stroke-width="0.7" />
<circle cx="929.90" cy="105.50" r="0.8" stroke="none" fill="#d22" stroke-width="0.5" />
<line x1="938.75" y1="107.90" x2="943.55" y2="103.10" stroke="#dd2222" stroke-width="0.7" />
<line x1="938.75" y1="107.90" x2="943.55" y2="103.10" stroke="#e04040" stroke-width="0.7" />
<path d="M949.8 107.7 A2.9 2.9 0 1 1 955.1999999999999 106.5" stroke="#7a3a10" fill="none" stroke-width="0.8" />
<circle cx="952.40" cy="105.50" r="0.8" stroke="none" fill="#d22" stroke-width="0.5" />
<rect x="961.4499999999999" y="103.3" width="4.4" height="4.4" fill="#778" stroke="#223" stroke-width="0.7" transform="rotate(20 963.65 105.5)"/>
<circle cx="963.65" cy="105.50" r="0.8" stroke="none" fill="#d33" stroke-width="0.5" />
<circle cx="974.90" cy="105.50" r="2.4" stroke="#a05010" fill="none" stroke-width="0.7" />
<circle cx="974.90" cy="105.50" r="0.7" stroke="none" fill="#d22" stroke-width="0.5" />
<line x1="983.55" y1="108.10" x2="988.75" y2="102.90" stroke="#8a3a10" stroke-width="0.7" />
<line x1="983.55" y1="102.90" x2="988.75" y2="108.10" stroke="#8a3a10" stroke-width="0.7" />
<circle cx="986.15" cy="105.50" r="0.8" stroke="none" fill="#e03030" stroke-width="0.5" />
<rect x="995.20" y="103.30" width="4.40" height="4.40" fill="none" stroke="#e4e4e8" stroke-width="0.7" />
<circle cx="997.40" cy="105.50" r="0.8" stroke="none" fill="#e06060" stroke-width="0.5" />
<line x1="905.00" y1="114.40" x2="909.80" y2="119.20" stroke="#999" stroke-width="0.7" />
<circle cx="907.40" cy="116.80" r="0.8" stroke="none" fill="#e55" stroke-width="0.5" />
<path d="M915.85 119.2 L916.65 115.2 H920.65 L921.4499999999999 119.2 Z" stroke="#666" fill="#eee" stroke-width="0.7" />
<circle cx="918.65" cy="116.80" r="0.8" stroke="none" fill="#d22" stroke-width="0.5" />
<path d="M927.3 119.39999999999999 L930.5 115.0 M929.3 116.39999999999999 L932.9 118.39999999999999 M930.5 115.0 L931.9 113.8" stroke="#777" fill="none" stroke-width="0.7" />
<circle cx="929.90" cy="116.80" r="0.8" stroke="none" fill="#333" stroke-width="0.5" />
<line x1="941.15" y1="114.20" x2="941.15" y2="119.40" stroke="#e05050" stroke-width="0.7" />
<line x1="938.55" y1="116.80" x2="943.75" y2="116.80" stroke="#bbb" stroke-width="0.7" />
<line x1="949.80" y1="116.80" x2="955.00" y2="116.80" stroke="#e8a0a0" stroke-width="0.6" />
<line x1="952.40" y1="114.20" x2="952.40" y2="119.40" stroke="#e03030" stroke-width="0.6" />
<line x1="961.05" y1="119.40" x2="966.25" y2="114.20" stroke="#ccc" stroke-width="0.7" />
<line x1="961.05" y1="114.20" x2="966.25" y2="119.40" stroke="#ccc" stroke-width="0.7" />
<circle cx="963.65" cy="116.80" r="0.8" stroke="none" fill="#e55" stroke-width="0.5" />
<path d="M972.5 119.0 L974.9 114.39999999999999 L977.3 119.0 Z" stroke="#333" fill="#333" stroke-width="0.4" />
<circle cx="974.90" cy="116.80" r="0.8" stroke="none" fill="#d22" stroke-width="0.5" />
<path d="M983.55 119.2 H984.9499999999999 Q983.35 114.0 986.15 114.0 Q988.9499999999999 114.0 987.35 119.2 H988.75" stroke="#3a1a00" fill="none" stroke-width="1.0" />
<line x1="995.00" y1="114.40" x2="999.80" y2="119.20" stroke="#8a3a10" stroke-width="0.7" />
<line x1="997.40" y1="114.20" x2="997.40" y2="119.40" stroke="#a05010" stroke-width="0.7" />
<circle cx="997.40" cy="116.80" r="0.8" stroke="none" fill="#d33" stroke-width="0.5" />
<path d="M905.0 130.2 L907.4 125.6 L909.8 130.2" stroke="#c05020" fill="none" stroke-width="0.7" />
<ellipse cx="918.65" cy="128" rx="2" ry="1.9" fill="#445" opacity="0.8"/>
<circle cx="918.65" cy="128.00" r="0.8" stroke="none" fill="#d33" stroke-width="0.5" />
<line x1="927.50" y1="130.40" x2="932.30" y2="125.60" stroke="#ccc" stroke-width="0.7" />
<line x1="905.00" y1="159.40" x2="909.80" y2="154.60" stroke="#445" stroke-width="0.7" />
<circle cx="905.00" cy="159.40" r="0.7" stroke="none" fill="#2a33dd" stroke-width="0.5" />
<path d="M916.25 155.6 L920.25 154.6 L918.25 157.4 L920.65 159.4" stroke="#334" fill="none" stroke-width="0.7" />
<circle cx="920.25" cy="154.60" r="0.7" stroke="none" fill="#2a33dd" stroke-width="0.5" />
<circle cx="918.25" cy="157.40" r="0.7" stroke="none" fill="#2a33dd" stroke-width="0.5" />
<circle cx="929.90" cy="157.00" r="2.4" stroke="#223" fill="none" stroke-width="0.7" />
<circle cx="929.90" cy="157.00" r="0.7" stroke="none" fill="#2a33dd" stroke-width="0.5" />
<path d="M938.75 154.6 L943.75 156.4 L940.55 159.6 Z" stroke="#334" fill="none" stroke-width="0.7" />
<circle cx="938.75" cy="154.60" r="0.7" stroke="none" fill="#2a33dd" stroke-width="0.5" />
<rect x="950.20" y="154.80" width="4.40" height="4.40" fill="none" stroke="#223" stroke-width="0.7" />
<circle cx="954.60" cy="159.20" r="0.7" stroke="none" fill="#2a33dd" stroke-width="0.5" />
<circle cx="950.20" cy="154.80" r="0.7" stroke="none" fill="#2a33dd" stroke-width="0.5" />
<path d="M963.65 154.4 L966.25 156.6 L965.05 159.4 H962.05 L961.05 156.6 Z" stroke="#334" fill="none" stroke-width="0.7" />
<circle cx="965.05" cy="159.40" r="0.7" stroke="none" fill="#2a33dd" stroke-width="0.5" />
<path d="M972.3 159.6 L975.5 155.2 M974.3 156.6 L977.9 158.6 M975.5 155.2 L976.9 154" stroke="#334" fill="none" stroke-width="0.7" />
<line x1="983.55" y1="158.60" x2="987.75" y2="154.40" stroke="#445" stroke-width="0.7" />
<line x1="984.55" y1="159.60" x2="988.75" y2="155.40" stroke="#445" stroke-width="0.7" />
<circle cx="986.15" cy="157.00" r="0.7" stroke="none" fill="#2a33dd" stroke-width="0.5" />
<path d="M997.4 154.4 L1000.0 156.6 L998.8 159.4 H995.8 L994.8 156.6 Z" stroke="#112" fill="none" stroke-width="0.7" />
<line x1="905.00" y1="164.90" x2="909.80" y2="169.70" stroke="#334" stroke-width="0.7" />
<path d="M904.8 169.9 L908.0 165.5 M906.8 166.9 L910.4 168.9 M908.0 165.5 L909.4 164.3" stroke="#334" fill="none" stroke-width="0.7" />
<circle cx="909.80" cy="169.70" r="0.7" stroke="none" fill="#2a33dd" stroke-width="0.5" />
<line x1="916.25" y1="164.90" x2="921.05" y2="169.70" stroke="#334" stroke-width="0.7" />
<path d="M916.05 169.9 L919.25 165.5 M918.05 166.9 L921.65 168.9 M919.25 165.5 L920.65 164.3" stroke="#334" fill="none" stroke-width="0.7" />
<circle cx="921.25" cy="169.50" r="0.7" stroke="none" fill="#2a33dd" stroke-width="0.5" />
<path d="M927.4 168.3 A2.5 2.5 0 0 1 932.4 168.3" stroke="#334" fill="none" stroke-width="0.8" transform="rotate(60.0 929.9 167.3)"/>
<circle cx="931.50" cy="169.10" r="0.7" stroke="none" fill="#2a33dd" stroke-width="0.5" />
<line x1="938.55" y1="167.30" x2="943.75" y2="167.30" stroke="#667" stroke-width="0.6" />
<line x1="941.15" y1="164.70" x2="941.15" y2="169.90" stroke="#667" stroke-width="0.6" />
<circle cx="941.15" cy="167.30" r="0.7" stroke="none" fill="#2a33dd" stroke-width="0.5" />
<path d="M952.4 164.5 V169.70000000000002 M950.8 168.10000000000002 L952.4 169.9 L954.0 168.10000000000002" stroke="#2a33dd" fill="none" stroke-width="0.7" />
<line x1="961.25" y1="169.70" x2="966.05" y2="164.90" stroke="#112" stroke-width="0.7" />
<line x1="961.05" y1="168.90" x2="965.25" y2="164.70" stroke="#334" stroke-width="0.7" />
<line x1="962.05" y1="169.90" x2="966.25" y2="165.70" stroke="#334" stroke-width="0.7" />
<circle cx="961.25" cy="169.70" r="0.7" stroke="none" fill="#2a33dd" stroke-width="0.5" />
<circle cx="907.40" cy="196.70" r="2.4" stroke="#223" fill="none" stroke-width="0.7" />
<circle cx="907.40" cy="196.70" r="0.7" stroke="none" fill="#2a33dd" stroke-width="0.5" />
<circle cx="918.65" cy="196.70" r="2.4" stroke="#223" fill="#556" stroke-width="0.7" />
<circle cx="919.65" cy="196.70" r="0.7" stroke="none" fill="#2a33dd" stroke-width="0.5" />
<circle cx="929.90" cy="196.70" r="2.4" stroke="#1a1a3a" fill="none" stroke-width="0.7" />
<circle cx="927.50" cy="196.70" r="0.7" stroke="none" fill="#2a33dd" stroke-width="0.5" />
<circle cx="932.30" cy="196.70" r="0.7" stroke="none" fill="#2a33dd" stroke-width="0.5" />
<path d="M938.75 197.7 A2.5 2.5 0 1 1 942.15 199.1" stroke="#445" fill="none" stroke-width="0.7" transform="rotate(100.0 941.15 196.7)"/>
<circle cx="941.15" cy="196.70" r="0.7" stroke="none" fill="#2a33dd" stroke-width="0.5" />
<circle cx="952.40" cy="196.70" r="2.4" stroke="#334" fill="none" stroke-width="0.7" />
<circle cx="950.80" cy="194.70" r="0.7" stroke="none" fill="#2a33dd" stroke-width="0.5" />
<circle cx="954.00" cy="194.70" r="0.7" stroke="none" fill="#2a33dd" stroke-width="0.5" />
<circle cx="963.65" cy="196.70" r="2.4" stroke="#223" fill="none" stroke-width="0.7" />
<circle cx="961.95" cy="195.00" r="0.7" stroke="none" fill="#2a33dd" stroke-width="0.5" />
<circle cx="965.35" cy="195.00" r="0.7" stroke="none" fill="#2a33dd" stroke-width="0.5" />
<circle cx="961.95" cy="198.40" r="0.7" stroke="none" fill="#2a33dd" stroke-width="0.5" />
<circle cx="965.35" cy="198.40" r="0.7" stroke="none" fill="#2a33dd" stroke-width="0.5" />
<circle cx="974.90" cy="196.70" r="2.4" stroke="#334" fill="none" stroke-width="0.7" />
<circle cx="973.70" cy="198.70" r="0.7" stroke="none" fill="#2a33dd" stroke-width="0.5" />
<circle cx="976.10" cy="198.70" r="0.7" stroke="none" fill="#2a33dd" stroke-width="0.5" />
<circle cx="986.15" cy="196.70" r="2.4" stroke="#778" fill="none" stroke-width="0.7" />
<circle cx="986.15" cy="199.50" r="0.7" stroke="none" fill="#2a33dd" stroke-width="0.5" />
<ellipse cx="997.4" cy="196.7" rx="2.6" ry="1.7" fill="none" stroke="#445" stroke-width="0.6"/>
<circle cx="994.80" cy="196.70" r="0.7" stroke="none" fill="#2a33dd" stroke-width="0.5" />
<ellipse cx="907.4" cy="207.8" rx="2.6" ry="1.7" fill="none" stroke="#99a" stroke-width="0.6"/>
<ellipse cx="918.65" cy="207.8" rx="2.6" ry="1.7" fill="none" stroke="#889" stroke-width="0.6"/>
<circle cx="918.65" cy="207.80" r="0.8" stroke="none" fill="#99a" stroke-width="0.5" />
<circle cx="929.90" cy="207.80" r="2.4" stroke="#112" fill="none" stroke-width="0.7" />
<circle cx="929.90" cy="207.80" r="0.8" stroke="none" fill="#33c" stroke-width="0.5" />
<path d="M905.0 237.6 A2.5 2.5 0 1 1 908.4 239.0" stroke="#334" fill="none" stroke-width="0.7" transform="rotate(20.0 907.4 236.6)"/>
<circle cx="905.20" cy="235.00" r="0.7" stroke="none" fill="#2a33dd" stroke-width="0.5" />
<circle cx="907.40" cy="236.60" r="0.7" stroke="none" fill="#2a33dd" stroke-width="0.5" />
<path d="M916.15 237.6 A2.5 2.5 0 0 1 921.15 237.6" stroke="#0a0a2a" fill="none" stroke-width="1.5" transform="rotate(0.0 918.65 236.6)"/>
<circle cx="920.65" cy="237.20" r="0.7" stroke="none" fill="#2a33dd" stroke-width="0.5" />
<path d="M927.4 237.6 A2.5 2.5 0 0 1 932.4 237.6" stroke="#445" fill="none" stroke-width="0.7" transform="rotate(180.0 929.9 236.6)"/>
<circle cx="932.10" cy="235.40" r="0.7" stroke="none" fill="#2a33dd" stroke-width="0.5" />
<line x1="938.75" y1="239.00" x2="943.55" y2="234.20" stroke="#334" stroke-width="0.7" />
<circle cx="941.75" cy="236.60" r="0.7" stroke="none" fill="#2a33dd" stroke-width="0.5" />
<path d="M949.9 237.6 A2.5 2.5 0 0 1 954.9 237.6" stroke="#1a1a4a" fill="none" stroke-width="1.0" transform="rotate(90.0 952.4 236.6)"/>
<circle cx="950.80" cy="234.60" r="0.7" stroke="none" fill="#2a33dd" stroke-width="0.5" />
<path d="M961.15 237.6 A2.5 2.5 0 0 1 966.15 237.6" stroke="#1a1a4a" fill="none" stroke-width="1.0" transform="rotate(90.0 963.65 236.6)"/>
<circle cx="962.05" cy="238.60" r="0.7" stroke="none" fill="#2a33dd" stroke-width="0.5" />
<path d="M972.5 237.6 A2.5 2.5 0 1 1 975.9 239.0" stroke="#445" fill="none" stroke-width="0.6" transform="rotate(200.0 974.9 236.6)"/>
<circle cx="974.90" cy="236.60" r="0.7" stroke="none" fill="#2a33dd" stroke-width="0.5" />
<path d="M983.75 238.79999999999998 L986.15 234.2 L988.55 238.79999999999998 Z" stroke="#334" fill="#334" stroke-width="0.4" />
<circle cx="986.15" cy="237.00" r="0.7" stroke="none" fill="#2a33dd" stroke-width="0.5" />
<path d="M994.9 237.6 A2.5 2.5 0 0 1 999.9 237.6" stroke="#667" fill="none" stroke-width="0.6" transform="rotate(270.0 997.4 236.6)"/>
<circle cx="997.80" cy="236.60" r="0.7" stroke="none" fill="#2a33dd" stroke-width="0.5" />
<path d="M905.0 248.9 A2.5 2.5 0 1 1 908.4 250.3" stroke="#445" fill="none" stroke-width="0.6" transform="rotate(30.0 907.4 247.9)"/>
<circle cx="905.40" cy="249.90" r="0.7" stroke="none" fill="#2a33dd" stroke-width="0.5" />
<path d="M916.15 248.9 A2.5 2.5 0 0 1 921.15 248.9" stroke="#2a33dd" fill="none" stroke-width="0.9" transform="rotate(180.0 918.65 247.9)"/>
<line x1="916.05" y1="247.90" x2="921.25" y2="247.90" stroke="#445" stroke-width="0.7" />
<ellipse cx="929.9" cy="247.9" rx="2.7" ry="1.5" fill="none" stroke="#556" stroke-width="0.7" transform="rotate(-35 929.9 247.9)"/>
<circle cx="929.90" cy="247.90" r="0.7" stroke="none" fill="#2a33dd" stroke-width="0.5" />
<path d="M938.65 248.9 A2.5 2.5 0 0 1 943.65 248.9" stroke="#223" fill="none" stroke-width="0.9" transform="rotate(0.0 941.15 247.9)"/>
<circle cx="938.75" cy="249.90" r="0.7" stroke="none" fill="#2a33dd" stroke-width="0.5" />
<circle cx="943.55" cy="249.90" r="0.7" stroke="none" fill="#2a33dd" stroke-width="0.5" />
<path d="M905.0 273.59999999999997 Q907.4 276.2 905.0 278.8 M909.8 273.59999999999997 Q907.4 276.2 909.8 278.8" stroke="#334" fill="none" stroke-width="0.7" />
<circle cx="905.00" cy="273.40" r="0.7" stroke="none" fill="#2a33dd" stroke-width="0.5" />
<circle cx="909.80" cy="273.40" r="0.7" stroke="none" fill="#2a33dd" stroke-width="0.5" />
<path d="M916.05 278.2 Q917.05 272.2 918.65 276.2 T921.25 274.2" stroke="#445" fill="none" stroke-width="0.7" />
<path d="M927.4 277.2 A2.5 2.5 0 0 1 932.4 277.2" stroke="#334" fill="none" stroke-width="0.8" transform="rotate(0.0 929.9 276.2)"/>
<circle cx="941.15" cy="276.20" r="2.4" stroke="#778" fill="none" stroke-width="0.7" />
<line x1="938.55" y1="276.20" x2="943.75" y2="276.20" stroke="#889" stroke-width="0.6" />
<line x1="941.15" y1="273.60" x2="941.15" y2="278.80" stroke="#889" stroke-width="0.6" />
<circle cx="952.40" cy="276.20" r="2.4" stroke="#c8b8e8" fill="none" stroke-width="0.7" />
<circle cx="952.40" cy="276.20" r="0.8" stroke="none" fill="#b8a0d8" stroke-width="0.5" />
<path d="M961.25 277.2 A2.5 2.5 0 1 1 964.65 278.59999999999997" stroke="#334" fill="none" stroke-width="0.8" transform="rotate(-45.0 963.65 276.2)"/>
<path d="M972.6999999999999 278.8 L973.9 273.59999999999997 L975.9 278.4 L977.3 273.4" stroke="#111" fill="none" stroke-width="0.9" />
<rect x="895.80" y="512.00" width="128.20" height="11.40" fill="#f0f0f0" />
<rect x="897.50" y="512.60" width="110.00" height="9.60" fill="#ececec" />
<line x1="919.60" y1="513.00" x2="919.60" y2="522.00" stroke="#dcdcdc" stroke-width="0.6" />
<line x1="941.60" y1="513.00" x2="941.60" y2="522.00" stroke="#dcdcdc" stroke-width="0.6" />
<line x1="963.80" y1="513.00" x2="963.80" y2="522.00" stroke="#dcdcdc" stroke-width="0.6" />
<line x1="986.00" y1="513.00" x2="986.00" y2="522.00" stroke="#dcdcdc" stroke-width="0.6" />
<line x1="1007.60" y1="513.00" x2="1007.60" y2="522.00" stroke="#dcdcdc" stroke-width="0.6" />
<rect x="897.50" y="512.00" width="21.80" height="10.40" fill="#ffffff" />
<rect x="899.40" y="515.60" width="4.80" height="4.80" fill="#e8eef8" stroke="#334" stroke-width="0.5" />
<rect x="900.60" y="516.80" width="2.40" height="2.60" fill="#c22" />
<text x="906.30" y="519.40" font-size="6.6" fill="#222" textLength="10.80" lengthAdjust="spacingAndGlyphs" >To...</text>
<rect x="922.40" y="515.60" width="4.80" height="4.80" fill="#e8eef8" stroke="#334" stroke-width="0.5" />
<rect x="923.60" y="516.80" width="2.40" height="2.60" fill="#558" />
<text x="929.30" y="519.40" font-size="6.6" fill="#222" textLength="10.80" lengthAdjust="spacingAndGlyphs" >Bl...</text>
<rect x="944.40" y="515.60" width="4.80" height="4.80" fill="#e8eef8" stroke="#334" stroke-width="0.5" />
<rect x="945.60" y="516.80" width="2.40" height="2.60" fill="#555" />
<text x="951.30" y="519.40" font-size="6.6" fill="#222" textLength="10.80" lengthAdjust="spacingAndGlyphs" >Se...</text>
<rect x="966.40" y="515.60" width="4.80" height="4.80" fill="#e8eef8" stroke="#334" stroke-width="0.5" />
<rect x="967.60" y="516.80" width="2.40" height="2.60" fill="#3a8" />
<text x="973.50" y="519.40" font-size="6.6" fill="#222" textLength="10.80" lengthAdjust="spacingAndGlyphs" >En...</text>
<rect x="988.60" y="515.60" width="4.80" height="4.80" fill="#e8eef8" stroke="#334" stroke-width="0.5" />
<rect x="989.80" y="516.80" width="2.40" height="2.60" fill="#a55" />
<text x="995.50" y="519.40" font-size="6.6" fill="#222" textLength="10.80" lengthAdjust="spacingAndGlyphs" >Li...</text>
<rect x="1012.00" y="62.30" width="12.00" height="187.00" fill="#f1f1f1" />
<line x1="1011.80" y1="62.30" x2="1011.80" y2="249.00" stroke="#e0e0e0" stroke-width="0.5" />
<path d="M1014.6 67.8 V73.8 H1019.8000000000001 V67.8" stroke="#c4c4c4" fill="none" stroke-width="0.8" />
<path d="M1014.0 86.89999999999999 A3.6 3.6 0 1 1 1020.4000000000001 85.89999999999999" stroke="#e02020" fill="none" stroke-width="0.8" />
<line x1="1016.20" y1="87.30" x2="1019.60" y2="82.70" stroke="#9a9a9a" stroke-width="0.7" />
<line x1="1014.00" y1="99.60" x2="1020.40" y2="93.20" stroke="#d0d0d0" stroke-width="0.8" />
<rect x="1013.40" y="105.60" width="3.20" height="3.20" fill="#fff" stroke="#111" stroke-width="0.8" />
<path d="M1015.8000000000001 106.4 Q1019.8000000000001 106.0 1020.0 109.4" stroke="#2ab02a" fill="none" stroke-width="0.7" />
<rect x="1017.20" y="109.20" width="3.80" height="3.80" fill="#fff" stroke="#e01010" stroke-width="1.0" />
<path d="M1014.2 124.5 V121.5 L1017.2 118.9 L1020.2 121.5 V124.5 Z" stroke="#d0d0d0" fill="#ececec" stroke-width="0.6" />
<rect x="1014.00" y="131.00" width="4.60" height="4.60" fill="none" stroke="#b4b4b4" stroke-width="0.6" />
<rect x="1016.00" y="133.00" width="4.60" height="4.60" fill="#fff" stroke="#b4b4b4" stroke-width="0.6" />
<rect x="1013.40" y="143.80" width="7.60" height="7.60" fill="#bdbdbd" />
<path d="M1013.4000000000001 146.4 H1021.0 M1013.4000000000001 149.0 H1021.0 M1016.0 143.79999999999998 V151.4 M1018.6 143.79999999999998 V151.4" stroke="#d4d4d4" fill="none" stroke-width="0.4" />
<path d="M1013.8000000000001 160.20000000000002 L1016.2 157.4 H1020.4000000000001 V160.8 L1018.0 163.0 H1013.8000000000001 Z" stroke="#c4c4c4" fill="#e8e8e8" stroke-width="0.7" />
<path d="M1013.6 172.8 L1016.8000000000001 168.6 H1020.8000000000001 L1017.8000000000001 174.20000000000002 H1013.6 Z" stroke="#c4c4c4" fill="#f4f4f4" stroke-width="0.7" />
<line x1="1014.40" y1="179.80" x2="1020.00" y2="185.20" stroke="#223" stroke-width="1.8" />
<line x1="1015.20" y1="180.60" x2="1018.60" y2="183.80" stroke="#e0d020" stroke-width="0.9" />
<circle cx="1019.80" cy="185.00" r="0.9" stroke="none" fill="#2244dd" stroke-width="0.5" />
<circle cx="1020.00" cy="180.80" r="0.7" stroke="none" fill="#2244dd" stroke-width="0.5" />
<circle cx="1017.20" cy="193.30" r="2.8" stroke="#c4c4c4" fill="#f8f8f8" stroke-width="0.7" />
<line x1="1015.40" y1="191.50" x2="1019.00" y2="195.10" stroke="#c4c4c4" stroke-width="0.7" />
<rect x="1014.00" y="201.30" width="2.80" height="2.60" fill="none" stroke="#cdcdcd" stroke-width="0.6" />
<rect x="1014.00" y="204.70" width="2.80" height="2.60" fill="none" stroke="#cdcdcd" stroke-width="0.6" />
<rect x="1017.60" y="201.30" width="2.80" height="2.60" fill="none" stroke="#cdcdcd" stroke-width="0.6" />
<rect x="1017.60" y="204.70" width="2.80" height="2.60" fill="none" stroke="#cdcdcd" stroke-width="0.6" />
<circle cx="1017.20" cy="217.70" r="2.9" stroke="#2a9a2a" fill="#e8e850" stroke-width="1.1" />
<circle cx="1017.20" cy="217.70" r="1.3" stroke="none" fill="#1a2ac8" stroke-width="0.5" />
<path d="M1017.2 213.5 V221.89999999999998 M1013.0 217.7 H1021.4000000000001" stroke="#2a9a2a" fill="none" stroke-width="0.4" />
<line x1="1014.60" y1="232.50" x2="1020.00" y2="227.50" stroke="#2a3ae0" stroke-width="0.8" />
<circle cx="1014.80" cy="232.50" r="1" stroke="none" fill="#2244dd" stroke-width="0.5" />
<circle cx="1020.00" cy="227.30" r="1" stroke="none" fill="#2244dd" stroke-width="0.5" />
<ellipse cx="1015.6" cy="227.70000000000002" rx="1.8" ry="1" fill="#111"/>
<rect x="1014.40" y="239.70" width="5.60" height="5.60" fill="none" stroke="#c0c0c0" stroke-width="0.9" stroke-dasharray="1.6 1.2"/>
<line x1="1013.00" y1="77.60" x2="1022.00" y2="77.60" stroke="#d8d8d8" stroke-width="0.6" />
<line x1="1013.00" y1="127.80" x2="1022.00" y2="127.80" stroke="#d8d8d8" stroke-width="0.6" />
<line x1="1013.00" y1="141.20" x2="1022.00" y2="141.20" stroke="#d8d8d8" stroke-width="0.6" />
<line x1="1013.00" y1="210.60" x2="1022.00" y2="210.60" stroke="#d8d8d8" stroke-width="0.6" />
<line x1="1013.00" y1="236.00" x2="1022.00" y2="236.00" stroke="#d8d8d8" stroke-width="0.6" />
<path d="M1023.4 76 V74.4 L1021.8 76 Z" stroke="none" fill="#222" stroke-width="0.5" />
<path d="M1023.4 101.5 V99.9 L1021.8 101.5 Z" stroke="none" fill="#222" stroke-width="0.5" />
<path d="M1023.4 114.5 V112.9 L1021.8 114.5 Z" stroke="none" fill="#222" stroke-width="0.5" />
<path d="M1023.4 139.5 V137.9 L1021.8 139.5 Z" stroke="none" fill="#222" stroke-width="0.5" />
<path d="M1023.4 152 V150.4 L1021.8 152 Z" stroke="none" fill="#222" stroke-width="0.5" />
<path d="M1023.4 164.5 V162.9 L1021.8 164.5 Z" stroke="none" fill="#222" stroke-width="0.5" />
<path d="M1023.4 176 V174.4 L1021.8 176 Z" stroke="none" fill="#222" stroke-width="0.5" />
<path d="M1023.4 187.5 V185.9 L1021.8 187.5 Z" stroke="none" fill="#222" stroke-width="0.5" />
<path d="M1023.4 198 V196.4 L1021.8 198 Z" stroke="none" fill="#222" stroke-width="0.5" />
<path d="M1023.4 222 V220.4 L1021.8 222 Z" stroke="none" fill="#222" stroke-width="0.5" />
<path d="M1023.4 235 V233.4 L1021.8 235 Z" stroke="none" fill="#222" stroke-width="0.5" />
<path d="M1023.4 247 V245.4 L1021.8 247 Z" stroke="none" fill="#222" stroke-width="0.5" />
</svg>
</body></html>
